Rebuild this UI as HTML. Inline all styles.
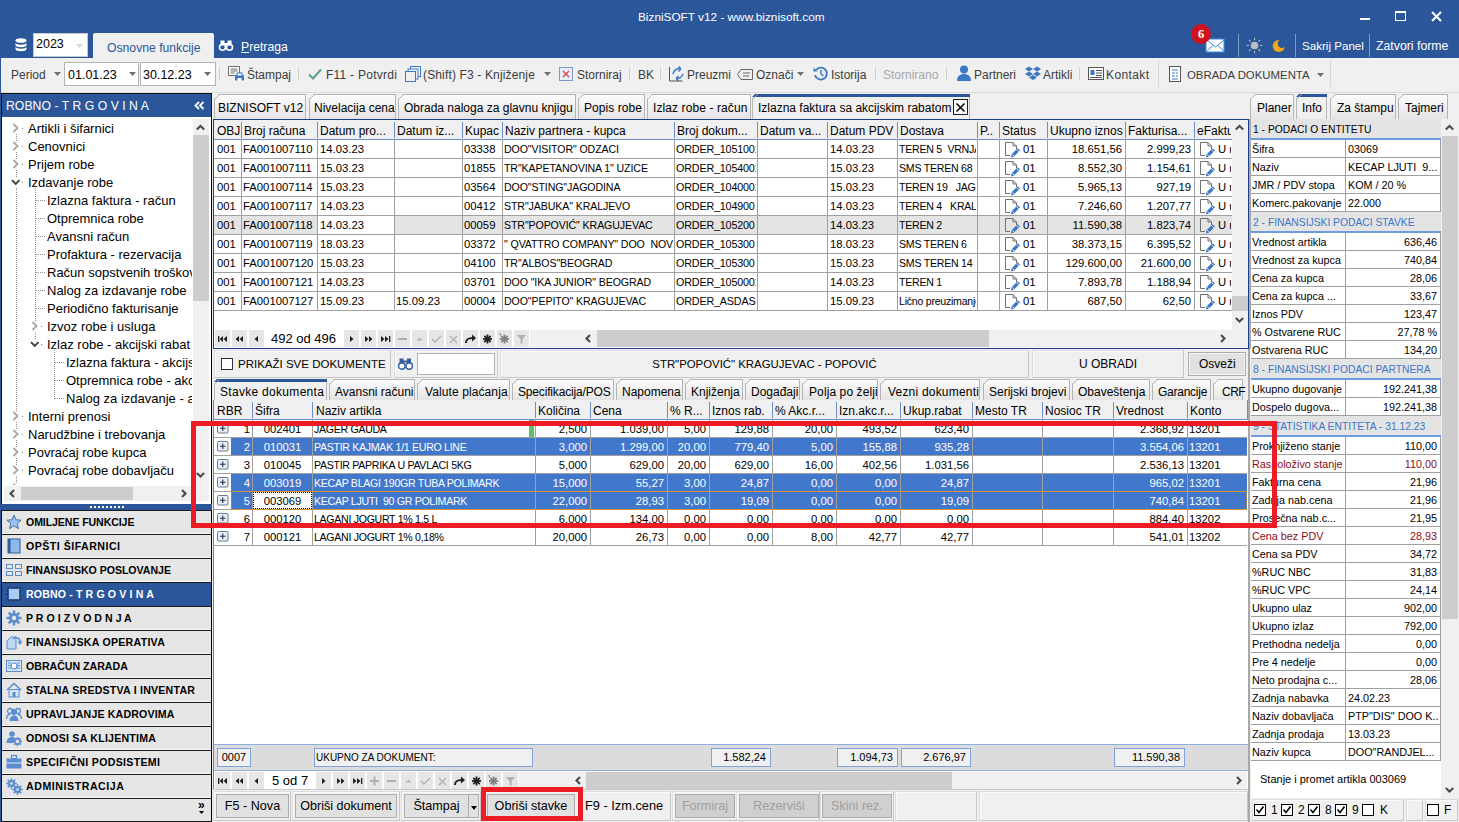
<!DOCTYPE html><html><head><meta charset='utf-8'><style>
*{margin:0;padding:0;box-sizing:border-box}
html,body{width:1459px;height:822px;overflow:hidden;background:#F0F0F0;font-family:"Liberation Sans",sans-serif;font-size:12px;color:#000}
div{position:absolute}
.t{white-space:pre}
svg{position:absolute;overflow:visible}
</style></head><body><div style="left:0px;top:0px;width:1459px;height:58px;background:#2B579A"></div>
<div class="t" style="left:638px;top:9px;height:16px;line-height:16px;color:#fff;font-size:11.8px">BizniSOFT v12 - www.biznisoft.com</div>
<div style="left:1360px;top:18px;width:10px;height:2px;background:#fff"></div>
<div style="left:1395px;top:11px;width:11px;height:10px;border:1.5px solid #fff;border-top-width:2.5px"></div>
<svg style="left:1431px;top:11px" width="11" height="11"><path d="M1 1L10 10M10 1L1 10" stroke="#fff" stroke-width="2"/></svg>
<svg style="left:15px;top:38px" width="12" height="14"><ellipse cx="6" cy="2.5" rx="5.5" ry="2.3" fill="#fff"/><path d="M0.5 4.5v2.5c0 1.3 2.5 2.3 5.5 2.3s5.5-1 5.5-2.3v-2.5c0 1.3-2.5 2.3-5.5 2.3s-5.5-1-5.5-2.3z" fill="#fff"/><path d="M0.5 8.5v2.5c0 1.3 2.5 2.3 5.5 2.3s5.5-1 5.5-2.3v-2.5c0 1.3-2.5 2.3-5.5 2.3s-5.5-1-5.5-2.3z" fill="#fff"/></svg>
<div style="left:33px;top:33px;width:55px;height:24px;background:#fff;border:1px solid #C8C8C8"></div>
<div class="t" style="left:36px;top:36px;height:16px;line-height:16px;font-size:12.5px">2023</div>
<svg style="left:76px;top:44px" width="7" height="4"><path d="M0 0h7L3.5 4z" fill="#D8D8D8"/></svg>
<div style="left:93px;top:33px;width:121px;height:25px;background:#F0F0F0;border-radius:2px 2px 0 0"></div>
<div class="t" style="left:107px;top:40px;height:16px;line-height:16px;color:#2B579A;font-size:12.2px">Osnovne funkcije</div>
<svg style="left:219px;top:40px" width="14" height="11"><circle cx="3.5" cy="7.2" r="3" fill="none" stroke="#fff" stroke-width="1.6"/><circle cx="10.5" cy="7.2" r="3" fill="none" stroke="#fff" stroke-width="1.6"/><rect x="1.5" y="0.5" width="4" height="5" fill="#fff"/><rect x="8.5" y="0.5" width="4" height="5" fill="#fff"/><rect x="5" y="3" width="4" height="2" fill="#fff"/></svg>
<div class="t" style="left:241px;top:39px;height:16px;line-height:16px;color:#fff;font-size:12.2px"><u>P</u>retraga</div>
<svg style="left:1191px;top:24px" width="36" height="30"><rect x="15" y="15" width="18" height="13" fill="#fff" stroke="#3A8DDE" stroke-width="1"/><path d="M15.5 15.5l9 7.5l9-7.5M15.5 27.5l6.5-6M33.5 27.5l-6.5-6" fill="none" stroke="#3A8DDE" stroke-width="1"/><circle cx="10" cy="10" r="9.9" fill="#D0121E"/><text x="10" y="14.2" font-family="Liberation Serif" font-weight="bold" font-size="12.5" fill="#fff" text-anchor="middle">6</text></svg>
<div style="left:1238px;top:34px;width:1px;height:23px;background:#7E9CC8"></div>
<div style="left:1295px;top:34px;width:1px;height:23px;background:#7E9CC8"></div>
<div style="left:1369px;top:34px;width:1px;height:23px;background:#7E9CC8"></div>
<svg style="left:1246px;top:37px" width="17" height="17"><circle cx="8.5" cy="8.5" r="3.8" fill="#BDBDBD"/><line x1="14.10" y1="8.50" x2="16.30" y2="8.50" stroke="#BDBDBD" stroke-width="1.1"/><line x1="12.46" y1="12.46" x2="14.02" y2="14.02" stroke="#BDBDBD" stroke-width="1.1"/><line x1="8.50" y1="14.10" x2="8.50" y2="16.30" stroke="#BDBDBD" stroke-width="1.1"/><line x1="4.54" y1="12.46" x2="2.98" y2="14.02" stroke="#BDBDBD" stroke-width="1.1"/><line x1="2.90" y1="8.50" x2="0.70" y2="8.50" stroke="#BDBDBD" stroke-width="1.1"/><line x1="4.54" y1="4.54" x2="2.98" y2="2.98" stroke="#BDBDBD" stroke-width="1.1"/><line x1="8.50" y1="2.90" x2="8.50" y2="0.70" stroke="#BDBDBD" stroke-width="1.1"/><line x1="12.46" y1="4.54" x2="14.02" y2="2.98" stroke="#BDBDBD" stroke-width="1.1"/></svg>
<svg style="left:1272px;top:39px" width="15" height="14"><defs><mask id="mm"><rect width="15" height="14" fill="#fff"/><circle cx="10" cy="4.6" r="4.3" fill="#000"/></mask></defs><circle cx="6.8" cy="7" r="6.1" fill="#F5A81C" mask="url(#mm)"/></svg>
<div class="t" style="left:1302px;top:38px;height:16px;line-height:16px;color:#fff;font-size:11.6px">Sakrij Panel</div>
<div class="t" style="left:1376px;top:38px;height:16px;line-height:16px;color:#fff;font-size:12.3px">Zatvori forme</div>
<div style="left:0px;top:58px;width:1459px;height:35px;background:#F0F0F0;border-bottom:1px solid #DADADA"></div>
<div class="t" style="left:11px;top:67px;height:16px;line-height:16px;color:#3C3C3C;font-size:12px">Period</div>
<svg style="left:54px;top:72px" width="7" height="4"><path d="M0 0h7L3.5 4z" fill="#707070"/></svg>
<div style="left:64px;top:62px;width:75px;height:24px;background:#fff;border:1px solid #B4B4B4"></div>
<div class="t" style="left:68px;top:67px;height:16px;line-height:16px;font-size:12.5px;color:#000">01.01.23</div>
<svg style="left:129px;top:72px" width="7" height="4"><path d="M0 0h7L3.5 4z" fill="#707070"/></svg>
<div style="left:140px;top:62px;width:76px;height:24px;background:#fff;border:1px solid #B4B4B4"></div>
<div class="t" style="left:143px;top:67px;height:16px;line-height:16px;font-size:12.5px;color:#000">30.12.23</div>
<svg style="left:204px;top:72px" width="7" height="4"><path d="M0 0h7L3.5 4z" fill="#707070"/></svg>
<div style="left:219px;top:67px;width:1px;height:13px;background:#D0D0D0"></div>
<div style="left:298px;top:67px;width:1px;height:13px;background:#D0D0D0"></div>
<div style="left:629px;top:67px;width:1px;height:13px;background:#D0D0D0"></div>
<div style="left:660px;top:67px;width:1px;height:13px;background:#D0D0D0"></div>
<div style="left:875px;top:67px;width:1px;height:13px;background:#D0D0D0"></div>
<div style="left:946px;top:67px;width:1px;height:13px;background:#D0D0D0"></div>
<div style="left:1079px;top:67px;width:1px;height:13px;background:#D0D0D0"></div>
<div style="left:1158px;top:67px;width:1px;height:13px;background:#D0D0D0"></div>
<div style="left:1330px;top:67px;width:1px;height:13px;background:#D0D0D0"></div>
<div style="left:1158px;top:60px;width:1px;height:27px;background:#D8D8D8"></div>
<div style="left:1330px;top:60px;width:1px;height:27px;background:#D8D8D8"></div>
<svg style="left:228px;top:66px" width="17" height="16"><path d="M0.5 0.5h11v9h-11z" fill="#fff" stroke="#6B6B6B"/><path d="M2.5 3h7M2.5 5h7M2.5 7h4" stroke="#6B6B6B"/><rect x="7" y="9" width="9" height="5.5" rx="1" fill="#3C78C8"/><rect x="9" y="7" width="5" height="3" fill="#fff" stroke="#3C78C8"/><rect x="9.5" y="12" width="4" height="3.5" fill="#fff"/></svg>
<div class="t" style="left:247px;top:67px;height:16px;line-height:16px;color:#3C3C3C;font-size:12px">Štampaj</div>
<svg style="left:308px;top:68px" width="14" height="12"><path d="M1 6.5l4 4l8-9" fill="none" stroke="#5AA383" stroke-width="2"/></svg>
<div class="t" style="left:326px;top:67px;height:16px;line-height:16px;color:#3C3C3C;font-size:12px;letter-spacing:0.25px">F11 - Potvrdi</div>
<svg style="left:405px;top:66px" width="16" height="16"><rect x="5.5" y="0.5" width="10" height="10" fill="#F0F0F0" stroke="#3C78C8"/><rect x="3" y="3" width="10" height="10" fill="#F0F0F0" stroke="#3C78C8"/><rect x="0.5" y="5.5" width="10" height="10" fill="#F0F0F0" stroke="#3C78C8"/></svg>
<div class="t" style="left:423px;top:67px;height:16px;line-height:16px;color:#3C3C3C;font-size:12px;letter-spacing:0.15px">(Shift) F3 - Knjiženje</div>
<svg style="left:544px;top:72px" width="7" height="4"><path d="M0 0h7L3.5 4z" fill="#707070"/></svg>
<svg style="left:559px;top:67px" width="14" height="14"><rect x="0.5" y="0.5" width="13" height="13" fill="#E8F0FA" stroke="#7A9CC8"/><path d="M4 4l6 6M10 4l-6 6" stroke="#E04040" stroke-width="1.4"/></svg>
<div class="t" style="left:577px;top:67px;height:16px;line-height:16px;color:#3C3C3C;font-size:12px">Storniraj</div>
<div class="t" style="left:638px;top:67px;height:16px;line-height:16px;color:#3C3C3C;font-size:12px">BK</div>
<svg style="left:669px;top:65px" width="16" height="17"><path d="M0.5 2v14h13" fill="none" stroke="#555" stroke-width="1"/><path d="M4 9c1-4 4-6 8-5M12 4l-2.5-2.5M12 4l-2.5 2.5M14 9c-1 3-4 5-7 4.5M7 13.5l2.5-2.5M7 13.5l2.5 2.5" fill="none" stroke="#3C78C8" stroke-width="1.5"/></svg>
<div class="t" style="left:687px;top:67px;height:16px;line-height:16px;color:#3C3C3C;font-size:12px">Preuzmi</div>
<svg style="left:737px;top:69px" width="16" height="11"><path d="M4 0.5h11.5v10H4L0.5 5.5z" fill="none" stroke="#666"/><path d="M6 4h7M6 7h6" stroke="#666"/></svg>
<div class="t" style="left:756px;top:67px;height:16px;line-height:16px;color:#3C3C3C;font-size:12px">Označi</div>
<svg style="left:797px;top:72px" width="7" height="4"><path d="M0 0h7L3.5 4z" fill="#707070"/></svg>
<svg style="left:813px;top:66px" width="15" height="15"><path d="M3 4A6 6 0 1 1 2 9" fill="none" stroke="#3C78C8" stroke-width="1.8"/><path d="M0.5 1.5v4h4z" fill="#3C78C8"/><path d="M8 4v4l2.5 2" fill="none" stroke="#3C78C8" stroke-width="1.5"/></svg>
<div class="t" style="left:831px;top:67px;height:16px;line-height:16px;color:#3C3C3C;font-size:12px">Istorija</div>
<div class="t" style="left:883px;top:67px;height:16px;line-height:16px;color:#A8A8A8;font-size:12px">Stornirano</div>
<svg style="left:957px;top:65px" width="14" height="16"><circle cx="7" cy="4.5" r="4" fill="#3C78C8"/><path d="M0 16c0-5 3-7 7-7s7 2 7 7z" fill="#3C78C8"/></svg>
<div class="t" style="left:974px;top:67px;height:16px;line-height:16px;color:#3C3C3C;font-size:12px">Partneri</div>
<svg style="left:1025px;top:66px" width="16" height="15"><path d="M4 0.5L0 3l4 2.5L8 3zM12 0.5L8 3l4 2.5L16 3zM4 5.5L0 8l4 2.5L8 8zM12 5.5L8 8l4 2.5L16 8zM4 11.5L8 14l4-2.5L8 9z" fill="#3C78C8"/></svg>
<div class="t" style="left:1043px;top:67px;height:16px;line-height:16px;color:#3C3C3C;font-size:12px">Artikli</div>
<svg style="left:1088px;top:67px" width="16" height="13"><rect x="0.5" y="0.5" width="15" height="12" fill="#fff" stroke="#555"/><rect x="2.5" y="3" width="4" height="5" fill="#3C78C8"/><path d="M8 3.5h6M8 6h6M8 8.5h6M2 10.5h12" stroke="#555"/></svg>
<div class="t" style="left:1106px;top:67px;height:16px;line-height:16px;color:#3C3C3C;font-size:12px;letter-spacing:0.4px">Kontakt</div>
<svg style="left:1169px;top:66px" width="12" height="16"><rect x="0.5" y="0.5" width="11" height="15" fill="#fff" stroke="#555"/><path d="M3 4h6M3 7h3M7 7h2M3 10h3M7 10h2M3 13h6" stroke="#3C78C8"/></svg>
<div class="t" style="left:1187px;top:67px;height:16px;line-height:16px;color:#3C3C3C;font-size:11.4px">OBRADA DOKUMENTA</div>
<svg style="left:1317px;top:73px" width="7" height="4"><path d="M0 0h7L3.5 4z" fill="#707070"/></svg>
<div style="left:0px;top:93px;width:212px;height:729px;background:#fff;border-left:2px solid #101010;border-right:1px solid #000"></div>
<div style="left:0px;top:93px;width:212px;height:24px;background:#2B579A;border:1px solid #101010;border-bottom:none;border-left-width:2px"></div>
<div class="t" style="left:6px;top:98px;height:16px;line-height:16px;color:#fff;font-size:12.2px;letter-spacing:0.05px">ROBNO - T R G O V I N A</div>
<svg style="left:194px;top:101px" width="11" height="9"><path d="M5 1L1.5 4.5L5 8M9.5 1L6 4.5L9.5 8" fill="none" stroke="#fff" stroke-width="1.8"/></svg>
<div style="left:2px;top:119px;width:190px;height:366px;overflow:hidden">
<div style="left:14px;top:15px;width:1px;height:7px;background-image:linear-gradient(#909090 50%,transparent 50%);background-size:1px 2px"></div>
<div style="left:14px;top:33px;width:1px;height:7px;background-image:linear-gradient(#909090 50%,transparent 50%);background-size:1px 2px"></div>
<div style="left:14px;top:51px;width:1px;height:7px;background-image:linear-gradient(#909090 50%,transparent 50%);background-size:1px 2px"></div>
<div style="left:14px;top:69px;width:1px;height:223px;background-image:linear-gradient(#909090 50%,transparent 50%);background-size:1px 2px"></div>
<div style="left:14px;top:303px;width:1px;height:7px;background-image:linear-gradient(#909090 50%,transparent 50%);background-size:1px 2px"></div>
<div style="left:14px;top:321px;width:1px;height:7px;background-image:linear-gradient(#909090 50%,transparent 50%);background-size:1px 2px"></div>
<div style="left:14px;top:339px;width:1px;height:7px;background-image:linear-gradient(#909090 50%,transparent 50%);background-size:1px 2px"></div>
<div style="left:14px;top:357px;width:1px;height:7px;background-image:linear-gradient(#909090 50%,transparent 50%);background-size:1px 2px"></div>
<div style="left:14px;top:375px;width:1px;height:-8px;background-image:linear-gradient(#909090 50%,transparent 50%);background-size:1px 2px"></div>
<div style="left:33px;top:69px;width:1px;height:120px;background-image:linear-gradient(#909090 50%,transparent 50%);background-size:1px 2px"></div>
<div style="left:33px;top:189px;width:1px;height:13px;background-image:linear-gradient(#909090 50%,transparent 50%);background-size:1px 2px"></div>
<div style="left:33px;top:213px;width:1px;height:7px;background-image:linear-gradient(#909090 50%,transparent 50%);background-size:1px 2px"></div>
<div style="left:52px;top:231px;width:1px;height:49px;background-image:linear-gradient(#909090 50%,transparent 50%);background-size:1px 2px"></div>
<div style="left:20px;top:9px;width:1px;height:1px;background:#808080"></div>
<svg style="left:10px;top:4px" width="8" height="11"><path d="M1.5 1L5.5 5L1.5 9" fill="none" stroke="#A8A8A8" stroke-width="1.9"/></svg>
<div class="t" style="left:26px;top:1px;height:18px;line-height:18px;font-size:13px;color:#000">Artikli i šifarnici</div>
<div style="left:20px;top:27px;width:1px;height:1px;background:#808080"></div>
<svg style="left:10px;top:22px" width="8" height="11"><path d="M1.5 1L5.5 5L1.5 9" fill="none" stroke="#A8A8A8" stroke-width="1.9"/></svg>
<div class="t" style="left:26px;top:19px;height:18px;line-height:18px;font-size:13px;color:#000">Cenovnici</div>
<div style="left:20px;top:45px;width:1px;height:1px;background:#808080"></div>
<svg style="left:10px;top:40px" width="8" height="11"><path d="M1.5 1L5.5 5L1.5 9" fill="none" stroke="#A8A8A8" stroke-width="1.9"/></svg>
<div class="t" style="left:26px;top:37px;height:18px;line-height:18px;font-size:13px;color:#000">Prijem robe</div>
<div style="left:20px;top:63px;width:1px;height:1px;background:#808080"></div>
<svg style="left:9px;top:60px" width="10" height="8"><path d="M1 1.2L4.75 5L8.5 1.2" fill="none" stroke="#404040" stroke-width="1.9"/></svg>
<div class="t" style="left:26px;top:55px;height:18px;line-height:18px;font-size:13px;color:#000">Izdavanje robe</div>
<div style="left:34px;top:81px;width:9px;height:1px;background-image:linear-gradient(90deg,#909090 50%,transparent 50%);background-size:2px 1px"></div>
<div class="t" style="left:45px;top:73px;height:18px;line-height:18px;font-size:13px;color:#000">Izlazna faktura - račun</div>
<div style="left:34px;top:99px;width:9px;height:1px;background-image:linear-gradient(90deg,#909090 50%,transparent 50%);background-size:2px 1px"></div>
<div class="t" style="left:45px;top:91px;height:18px;line-height:18px;font-size:13px;color:#000">Otpremnica robe</div>
<div style="left:34px;top:117px;width:9px;height:1px;background-image:linear-gradient(90deg,#909090 50%,transparent 50%);background-size:2px 1px"></div>
<div class="t" style="left:45px;top:109px;height:18px;line-height:18px;font-size:13px;color:#000">Avansni račun</div>
<div style="left:34px;top:135px;width:9px;height:1px;background-image:linear-gradient(90deg,#909090 50%,transparent 50%);background-size:2px 1px"></div>
<div class="t" style="left:45px;top:127px;height:18px;line-height:18px;font-size:13px;color:#000">Profaktura - rezervacija</div>
<div style="left:34px;top:153px;width:9px;height:1px;background-image:linear-gradient(90deg,#909090 50%,transparent 50%);background-size:2px 1px"></div>
<div class="t" style="left:45px;top:145px;height:18px;line-height:18px;font-size:13px;color:#000">Račun sopstvenih troškova</div>
<div style="left:34px;top:171px;width:9px;height:1px;background-image:linear-gradient(90deg,#909090 50%,transparent 50%);background-size:2px 1px"></div>
<div class="t" style="left:45px;top:163px;height:18px;line-height:18px;font-size:13px;color:#000">Nalog za izdavanje robe</div>
<div style="left:34px;top:189px;width:9px;height:1px;background-image:linear-gradient(90deg,#909090 50%,transparent 50%);background-size:2px 1px"></div>
<div class="t" style="left:45px;top:181px;height:18px;line-height:18px;font-size:13px;color:#000">Periodično fakturisanje</div>
<div style="left:39px;top:207px;width:1px;height:1px;background:#808080"></div>
<svg style="left:29px;top:202px" width="8" height="11"><path d="M1.5 1L5.5 5L1.5 9" fill="none" stroke="#A8A8A8" stroke-width="1.9"/></svg>
<div class="t" style="left:45px;top:199px;height:18px;line-height:18px;font-size:13px;color:#000">Izvoz robe i usluga</div>
<div style="left:39px;top:225px;width:1px;height:1px;background:#808080"></div>
<svg style="left:28px;top:222px" width="10" height="8"><path d="M1 1.2L4.75 5L8.5 1.2" fill="none" stroke="#404040" stroke-width="1.9"/></svg>
<div class="t" style="left:45px;top:217px;height:18px;line-height:18px;font-size:13px;color:#000">Izlaz robe - akcijski rabat</div>
<div style="left:53px;top:243px;width:9px;height:1px;background-image:linear-gradient(90deg,#909090 50%,transparent 50%);background-size:2px 1px"></div>
<div class="t" style="left:64px;top:235px;height:18px;line-height:18px;font-size:13px;color:#000">Izlazna faktura - akcijski rabat</div>
<div style="left:53px;top:261px;width:9px;height:1px;background-image:linear-gradient(90deg,#909090 50%,transparent 50%);background-size:2px 1px"></div>
<div class="t" style="left:64px;top:253px;height:18px;line-height:18px;font-size:13px;color:#000">Otpremnica robe - akcijski</div>
<div style="left:53px;top:279px;width:9px;height:1px;background-image:linear-gradient(90deg,#909090 50%,transparent 50%);background-size:2px 1px"></div>
<div class="t" style="left:64px;top:271px;height:18px;line-height:18px;font-size:13px;color:#000">Nalog za izdavanje - akcijski</div>
<div style="left:20px;top:297px;width:1px;height:1px;background:#808080"></div>
<svg style="left:10px;top:292px" width="8" height="11"><path d="M1.5 1L5.5 5L1.5 9" fill="none" stroke="#A8A8A8" stroke-width="1.9"/></svg>
<div class="t" style="left:26px;top:289px;height:18px;line-height:18px;font-size:13px;color:#000">Interni prenosi</div>
<div style="left:20px;top:315px;width:1px;height:1px;background:#808080"></div>
<svg style="left:10px;top:310px" width="8" height="11"><path d="M1.5 1L5.5 5L1.5 9" fill="none" stroke="#A8A8A8" stroke-width="1.9"/></svg>
<div class="t" style="left:26px;top:307px;height:18px;line-height:18px;font-size:13px;color:#000">Narudžbine i trebovanja</div>
<div style="left:20px;top:333px;width:1px;height:1px;background:#808080"></div>
<svg style="left:10px;top:328px" width="8" height="11"><path d="M1.5 1L5.5 5L1.5 9" fill="none" stroke="#A8A8A8" stroke-width="1.9"/></svg>
<div class="t" style="left:26px;top:325px;height:18px;line-height:18px;font-size:13px;color:#000">Povraćaj robe kupca</div>
<div style="left:20px;top:351px;width:1px;height:1px;background:#808080"></div>
<svg style="left:10px;top:346px" width="8" height="11"><path d="M1.5 1L5.5 5L1.5 9" fill="none" stroke="#A8A8A8" stroke-width="1.9"/></svg>
<div class="t" style="left:26px;top:343px;height:18px;line-height:18px;font-size:13px;color:#000">Povraćaj robe dobavljaču</div>
<div style="left:20px;top:369px;width:1px;height:1px;background:#808080"></div>
<svg style="left:10px;top:364px" width="8" height="11"><path d="M1.5 1L5.5 5L1.5 9" fill="none" stroke="#A8A8A8" stroke-width="1.9"/></svg>
</div>
<div style="left:193px;top:119px;width:16px;height:367px;background:#F0F0F0"></div>
<div style="left:193px;top:135px;width:16px;height:166px;background:#CDCDCD"></div>
<svg style="left:196px;top:124px" width="9" height="9"><path d="M0.8 5.5L4.5 2L8.2 5.5" fill="none" stroke="#4A4A4A" stroke-width="2.1"/></svg>
<svg style="left:196px;top:471px" width="9" height="9"><path d="M0.8 2L4.5 5.5L8.2 2" fill="none" stroke="#4A4A4A" stroke-width="2.1"/></svg>
<div style="left:4px;top:486px;width:189px;height:15px;background:#F0F0F0"></div>
<div style="left:21px;top:487px;width:112px;height:13px;background:#CDCDCD"></div>
<svg style="left:8px;top:489px" width="9" height="9"><path d="M6 1L2.5 4.5L6 8" fill="none" stroke="#4A4A4A" stroke-width="2.1"/></svg>
<svg style="left:180px;top:489px" width="9" height="9"><path d="M2 1L5.5 4.5L2 8" fill="none" stroke="#4A4A4A" stroke-width="2.1"/></svg>
<div style="left:193px;top:486px;width:16px;height:15px;background:#F0F0F0"></div>
<div style="left:0px;top:504px;width:212px;height:6px;background:#2B579A"></div>
<div style="left:90px;top:506px;width:34px;height:2px;background-image:linear-gradient(90deg,#fff 60%,transparent 60%);background-size:4px 2px"></div>
<div style="left:2px;top:510px;width:209px;height:24px;background:#E6E6E6;border-top:1px solid #1A1A1A;border-bottom:1px solid #F8F8F8"></div>
<div class="t" style="left:26px;top:514px;height:16px;line-height:16px;color:#000;font-weight:bold;font-size:10.6px;letter-spacing:-0.1px">OMILJENE FUNKCIJE</div>
<svg style="left:6px;top:514px" width="16" height="16"><polygon points="8.00,1.00 10.00,5.75 15.13,6.18 11.23,9.55 12.41,14.57 8.00,11.90 3.59,14.57 4.77,9.55 0.87,6.18 6.00,5.75" fill="#9CC3EE" stroke="#2F5D9A" stroke-width="0.8"/></svg>
<div style="left:2px;top:534px;width:209px;height:24px;background:#E6E6E6;border-top:1px solid #1A1A1A;border-bottom:1px solid #F8F8F8"></div>
<div class="t" style="left:26px;top:538px;height:16px;line-height:16px;color:#000;font-weight:bold;font-size:10.6px;letter-spacing:0.49px">OPŠTI ŠIFARNICI</div>
<svg style="left:6px;top:538px" width="16" height="16"><rect x="2" y="1" width="12" height="14" fill="#8DB8EA" stroke="#2F5D9A"/><rect x="2" y="1" width="2.5" height="14" fill="#2F5D9A"/></svg>
<div style="left:2px;top:558px;width:209px;height:24px;background:#E6E6E6;border-top:1px solid #1A1A1A;border-bottom:1px solid #F8F8F8"></div>
<div class="t" style="left:26px;top:562px;height:16px;line-height:16px;color:#000;font-weight:bold;font-size:10.6px;letter-spacing:-0.04px">FINANSIJSKO POSLOVANJE</div>
<svg style="left:6px;top:562px" width="16" height="16"><rect x="0.5" y="2.5" width="6" height="4" fill="none" stroke="#5B8DD0"/><rect x="9.5" y="2.5" width="6" height="4" fill="none" stroke="#5B8DD0"/><rect x="0.5" y="9.5" width="6" height="4" fill="none" stroke="#5B8DD0"/><rect x="9.5" y="9.5" width="6" height="4" fill="none" stroke="#5B8DD0"/></svg>
<div style="left:2px;top:582px;width:209px;height:24px;background:#2B579A;border-top:1px solid #1A1A1A;border-bottom:1px solid #2B579A"></div>
<div class="t" style="left:26px;top:586px;height:16px;line-height:16px;color:#fff;font-weight:bold;font-size:10.6px;letter-spacing:0.13px">ROBNO - T R G O V I N A</div>
<svg style="left:6px;top:586px" width="16" height="16"><rect x="1.5" y="1.5" width="13" height="13" fill="none" stroke="#202A40" stroke-dasharray="2 2"/><rect x="3" y="3" width="10" height="10" fill="#A8CBF2"/></svg>
<div style="left:2px;top:606px;width:209px;height:24px;background:#E6E6E6;border-top:1px solid #1A1A1A;border-bottom:1px solid #F8F8F8"></div>
<div class="t" style="left:26px;top:610px;height:16px;line-height:16px;color:#000;font-weight:bold;font-size:10.6px;letter-spacing:0.02px">P R O I Z V O D N J A</div>
<svg style="left:6px;top:610px" width="16" height="16"><circle cx="8" cy="8" r="5" fill="#5B8DD0"/><circle cx="8" cy="8" r="2.2" fill="#E6E6E6"/><line x1="12.00" y1="8.00" x2="15.50" y2="8.00" stroke="#5B8DD0" stroke-width="2.4"/><line x1="10.83" y1="10.83" x2="13.30" y2="13.30" stroke="#5B8DD0" stroke-width="2.4"/><line x1="8.00" y1="12.00" x2="8.00" y2="15.50" stroke="#5B8DD0" stroke-width="2.4"/><line x1="5.17" y1="10.83" x2="2.70" y2="13.30" stroke="#5B8DD0" stroke-width="2.4"/><line x1="4.00" y1="8.00" x2="0.50" y2="8.00" stroke="#5B8DD0" stroke-width="2.4"/><line x1="5.17" y1="5.17" x2="2.70" y2="2.70" stroke="#5B8DD0" stroke-width="2.4"/><line x1="8.00" y1="4.00" x2="8.00" y2="0.50" stroke="#5B8DD0" stroke-width="2.4"/><line x1="10.83" y1="5.17" x2="13.30" y2="2.70" stroke="#5B8DD0" stroke-width="2.4"/></svg>
<div style="left:2px;top:630px;width:209px;height:24px;background:#E6E6E6;border-top:1px solid #1A1A1A;border-bottom:1px solid #F8F8F8"></div>
<div class="t" style="left:26px;top:634px;height:16px;line-height:16px;color:#000;font-weight:bold;font-size:10.6px;letter-spacing:0.27px">FINANSIJSKA OPERATIVA</div>
<svg style="left:6px;top:634px" width="16" height="16"><path d="M1 15V7l4-4h5v12z" fill="#BFD8F5" stroke="#5B8DD0"/><path d="M7 5c3-3 7-1 7 3" fill="none" stroke="#5B8DD0" stroke-width="1.6"/><path d="M11.5 7.5h5l-2.5 3.5z" fill="#5B8DD0"/></svg>
<div style="left:2px;top:654px;width:209px;height:24px;background:#E6E6E6;border-top:1px solid #1A1A1A;border-bottom:1px solid #F8F8F8"></div>
<div class="t" style="left:26px;top:658px;height:16px;line-height:16px;color:#000;font-weight:bold;font-size:10.6px;letter-spacing:0px">OBRAČUN ZARADA</div>
<svg style="left:6px;top:658px" width="16" height="16"><rect x="0.5" y="2.5" width="15" height="11" fill="#D6E6F8" stroke="#5B8DD0"/><path d="M2 5h3M2 7.5h3M2 10h3M11 5h3M11 7.5h3M11 10h3" stroke="#5B8DD0"/><circle cx="8" cy="8" r="3" fill="#fff" stroke="#5B8DD0" stroke-width="1.2"/></svg>
<div style="left:2px;top:678px;width:209px;height:24px;background:#E6E6E6;border-top:1px solid #1A1A1A;border-bottom:1px solid #F8F8F8"></div>
<div class="t" style="left:26px;top:682px;height:16px;line-height:16px;color:#000;font-weight:bold;font-size:10.6px;letter-spacing:0.22px">STALNA SREDSTVA I INVENTAR</div>
<svg style="left:6px;top:682px" width="16" height="16"><path d="M1 8L8 1.5L15 8" fill="none" stroke="#5B8DD0" stroke-width="1.5"/><rect x="3" y="7.5" width="10" height="7.5" fill="#D6E6F8" stroke="#5B8DD0"/><rect x="6.5" y="10" width="3" height="5" fill="#5B8DD0"/></svg>
<div style="left:2px;top:702px;width:209px;height:24px;background:#E6E6E6;border-top:1px solid #1A1A1A;border-bottom:1px solid #F8F8F8"></div>
<div class="t" style="left:26px;top:706px;height:16px;line-height:16px;color:#000;font-weight:bold;font-size:10.6px;letter-spacing:0.16px">UPRAVLJANJE KADROVIMA</div>
<svg style="left:6px;top:706px" width="16" height="16"><circle cx="4" cy="5" r="2.5" fill="none" stroke="#5B8DD0" stroke-width="1.3"/><circle cx="12" cy="5" r="2.5" fill="none" stroke="#5B8DD0" stroke-width="1.3"/><path d="M0.5 13c0-3 1.5-4.5 3.5-4.5M15.5 13c0-3-1.5-4.5-3.5-4.5" fill="none" stroke="#5B8DD0" stroke-width="1.3"/><circle cx="8" cy="6" r="3" fill="#5B8DD0"/><path d="M3.5 15c0-3.5 2-5.5 4.5-5.5s4.5 2 4.5 5.5z" fill="#5B8DD0"/></svg>
<div style="left:2px;top:726px;width:209px;height:24px;background:#E6E6E6;border-top:1px solid #1A1A1A;border-bottom:1px solid #F8F8F8"></div>
<div class="t" style="left:26px;top:730px;height:16px;line-height:16px;color:#000;font-weight:bold;font-size:10.6px;letter-spacing:0.23px">ODNOSI SA KLIJENTIMA</div>
<svg style="left:6px;top:730px" width="16" height="16"><circle cx="6" cy="4" r="2.8" fill="#5B8DD0"/><path d="M0.5 13c0-4 2.5-6 5.5-6c1.5 0 2.5 0.5 3.5 1.5L7.5 13z" fill="#5B8DD0"/><circle cx="11.5" cy="11.5" r="2.6" fill="none" stroke="#5B8DD0" stroke-width="1.6"/><line x1="14.00" y1="11.50" x2="16.00" y2="11.50" stroke="#5B8DD0" stroke-width="1.4"/><line x1="13.27" y1="13.27" x2="14.68" y2="14.68" stroke="#5B8DD0" stroke-width="1.4"/><line x1="11.50" y1="14.00" x2="11.50" y2="16.00" stroke="#5B8DD0" stroke-width="1.4"/><line x1="9.73" y1="13.27" x2="8.32" y2="14.68" stroke="#5B8DD0" stroke-width="1.4"/><line x1="9.00" y1="11.50" x2="7.00" y2="11.50" stroke="#5B8DD0" stroke-width="1.4"/><line x1="9.73" y1="9.73" x2="8.32" y2="8.32" stroke="#5B8DD0" stroke-width="1.4"/><line x1="11.50" y1="9.00" x2="11.50" y2="7.00" stroke="#5B8DD0" stroke-width="1.4"/><line x1="13.27" y1="9.73" x2="14.68" y2="8.32" stroke="#5B8DD0" stroke-width="1.4"/></svg>
<div style="left:2px;top:750px;width:209px;height:24px;background:#E6E6E6;border-top:1px solid #1A1A1A;border-bottom:1px solid #F8F8F8"></div>
<div class="t" style="left:26px;top:754px;height:16px;line-height:16px;color:#000;font-weight:bold;font-size:10.6px;letter-spacing:0.31px">SPECIFIČNI PODSISTEMI</div>
<svg style="left:6px;top:754px" width="16" height="16"><rect x="0.5" y="4.5" width="15" height="10" fill="#5B8DD0"/><rect x="5.5" y="1.5" width="5" height="3" fill="none" stroke="#5B8DD0" stroke-width="1.2"/><line x1="0.5" y1="9" x2="15.5" y2="9" stroke="#E6E6E6"/></svg>
<div style="left:2px;top:774px;width:209px;height:24px;background:#E6E6E6;border-top:1px solid #1A1A1A;border-bottom:1px solid #F8F8F8"></div>
<div class="t" style="left:26px;top:778px;height:16px;line-height:16px;color:#000;font-weight:bold;font-size:10.6px;letter-spacing:0.56px">ADMINISTRACIJA</div>
<svg style="left:6px;top:778px" width="16" height="16"><circle cx="5.5" cy="5.5" r="3.5" fill="#5B8DD0"/><circle cx="5.5" cy="5.5" r="1.3" fill="#E6E6E6"/><circle cx="11.5" cy="11.5" r="3.5" fill="#5B8DD0"/><circle cx="11.5" cy="11.5" r="1.3" fill="#E6E6E6"/><line x1="8.50" y1="5.50" x2="10.80" y2="5.50" stroke="#5B8DD0" stroke-width="1.6"/><line x1="14.50" y1="11.50" x2="16.80" y2="11.50" stroke="#5B8DD0" stroke-width="1.6"/><line x1="7.62" y1="7.62" x2="9.25" y2="9.25" stroke="#5B8DD0" stroke-width="1.6"/><line x1="13.62" y1="13.62" x2="15.25" y2="15.25" stroke="#5B8DD0" stroke-width="1.6"/><line x1="5.50" y1="8.50" x2="5.50" y2="10.80" stroke="#5B8DD0" stroke-width="1.6"/><line x1="11.50" y1="14.50" x2="11.50" y2="16.80" stroke="#5B8DD0" stroke-width="1.6"/><line x1="3.38" y1="7.62" x2="1.75" y2="9.25" stroke="#5B8DD0" stroke-width="1.6"/><line x1="9.38" y1="13.62" x2="7.75" y2="15.25" stroke="#5B8DD0" stroke-width="1.6"/><line x1="2.50" y1="5.50" x2="0.20" y2="5.50" stroke="#5B8DD0" stroke-width="1.6"/><line x1="8.50" y1="11.50" x2="6.20" y2="11.50" stroke="#5B8DD0" stroke-width="1.6"/><line x1="3.38" y1="3.38" x2="1.75" y2="1.75" stroke="#5B8DD0" stroke-width="1.6"/><line x1="9.38" y1="9.38" x2="7.75" y2="7.75" stroke="#5B8DD0" stroke-width="1.6"/><line x1="5.50" y1="2.50" x2="5.50" y2="0.20" stroke="#5B8DD0" stroke-width="1.6"/><line x1="11.50" y1="8.50" x2="11.50" y2="6.20" stroke="#5B8DD0" stroke-width="1.6"/><line x1="7.62" y1="3.38" x2="9.25" y2="1.75" stroke="#5B8DD0" stroke-width="1.6"/><line x1="13.62" y1="9.38" x2="15.25" y2="7.75" stroke="#5B8DD0" stroke-width="1.6"/></svg>
<div style="left:2px;top:798px;width:209px;height:24px;background:#E6E6E6;border-top:1px solid #1A1A1A;border-bottom:1px solid #1A1A1A"></div>
<div class="t" style="left:198px;top:799px;height:12px;line-height:12px;font-size:12px;font-weight:bold">&raquo;</div>
<svg style="left:199px;top:811px" width="5" height="3"><path d="M0 0h5L2.5 3z" fill="#000"/></svg>
<div style="left:213px;top:93px;width:1036px;height:26px;background:#F0F0F0"></div>
<div style="left:214px;top:94px;width:92px;height:25px;background:linear-gradient(#FCFCFC,#E4E4E4);border:1px solid #B4B4B4;border-bottom:none;clip-path:polygon(5px 0,100% 0,100% 100%,0 100%,0 5px)"></div>
<svg style="left:214px;top:94px" width="6" height="6"><line x1="0.5" y1="5.5" x2="5.5" y2="0.5" stroke="#B4B4B4"/></svg>
<div class="t" style="left:218px;top:100px;height:16px;line-height:16px;font-size:12px;letter-spacing:0px">BIZNISOFT v12</div>
<div style="left:309px;top:94px;width:87px;height:25px;background:linear-gradient(#FCFCFC,#E4E4E4);border:1px solid #B4B4B4;border-bottom:none;clip-path:polygon(5px 0,100% 0,100% 100%,0 100%,0 5px)"></div>
<svg style="left:309px;top:94px" width="6" height="6"><line x1="0.5" y1="5.5" x2="5.5" y2="0.5" stroke="#B4B4B4"/></svg>
<div class="t" style="left:314px;top:100px;height:16px;line-height:16px;font-size:12px;letter-spacing:0px">Nivelacija cena</div>
<div style="left:398px;top:94px;width:178px;height:25px;background:linear-gradient(#FCFCFC,#E4E4E4);border:1px solid #B4B4B4;border-bottom:none;clip-path:polygon(5px 0,100% 0,100% 100%,0 100%,0 5px)"></div>
<svg style="left:398px;top:94px" width="6" height="6"><line x1="0.5" y1="5.5" x2="5.5" y2="0.5" stroke="#B4B4B4"/></svg>
<div class="t" style="left:404px;top:100px;height:16px;line-height:16px;font-size:12px;letter-spacing:0px">Obrada naloga za glavnu knjigu</div>
<div style="left:578px;top:94px;width:67px;height:25px;background:linear-gradient(#FCFCFC,#E4E4E4);border:1px solid #B4B4B4;border-bottom:none;clip-path:polygon(5px 0,100% 0,100% 100%,0 100%,0 5px)"></div>
<svg style="left:578px;top:94px" width="6" height="6"><line x1="0.5" y1="5.5" x2="5.5" y2="0.5" stroke="#B4B4B4"/></svg>
<div class="t" style="left:584px;top:100px;height:16px;line-height:16px;font-size:12px;letter-spacing:0.05px">Popis robe</div>
<div style="left:647px;top:94px;width:104px;height:25px;background:linear-gradient(#FCFCFC,#E4E4E4);border:1px solid #B4B4B4;border-bottom:none;clip-path:polygon(5px 0,100% 0,100% 100%,0 100%,0 5px)"></div>
<svg style="left:647px;top:94px" width="6" height="6"><line x1="0.5" y1="5.5" x2="5.5" y2="0.5" stroke="#B4B4B4"/></svg>
<div class="t" style="left:653px;top:100px;height:16px;line-height:16px;font-size:12px;letter-spacing:0.1px">Izlaz robe - račun</div>
<div style="left:752px;top:94px;width:218px;height:26px;background:#F0F0F0;border-left:1px solid #B8B8B8;border-right:1px solid #B8B8B8;clip-path:polygon(5px 0,100% 0,100% 100%,0 100%,0 5px)"></div>
<div style="left:752px;top:94px;width:218px;height:3px;background:#2B579A;clip-path:polygon(3px 0,100% 0,100% 100%,0 100%)"></div>
<svg style="left:752px;top:94px" width="6" height="6"><line x1="0.5" y1="5.5" x2="5.5" y2="0.5" stroke="#B4B4B4"/></svg>
<div class="t" style="left:758px;top:100px;height:16px;line-height:16px;font-size:12px;letter-spacing:0px">Izlazna faktura sa akcijskim rabatom</div>
<div style="left:953px;top:99px;width:15px;height:16px;border:1px solid #202020;background:#F8F8F8"></div>
<svg style="left:956px;top:103px" width="9" height="9"><path d="M0.5 0.5L8.5 8.5M8.5 0.5L0.5 8.5" stroke="#000" stroke-width="1.5"/></svg>
<div style="left:213px;top:119px;width:1036px;height:230px;background:#fff;border:1px solid #1C3C8C"></div>
<div style="left:214px;top:120px;width:1018px;height:19px;background:#F0F0F0"></div>
<div style="left:214px;top:139px;width:1018px;height:1px;background:#6C8ECB"></div>
<div style="left:214px;top:120px;width:1018px;height:191px;overflow:hidden">
<div class="t" style="left:3px;top:2px;width:23px;height:18px;line-height:18px;font-size:12px;overflow:hidden">OBJ</div>
<div class="t" style="left:30px;top:2px;width:72px;height:18px;line-height:18px;font-size:12px;overflow:hidden">Broj računa</div>
<div style="left:27px;top:2px;width:1px;height:16px;background:#6C8ECB"></div>
<div class="t" style="left:106px;top:2px;width:73px;height:18px;line-height:18px;font-size:12px;overflow:hidden">Datum pro...</div>
<div style="left:103px;top:2px;width:1px;height:16px;background:#6C8ECB"></div>
<div class="t" style="left:183px;top:2px;width:64px;height:18px;line-height:18px;font-size:12px;overflow:hidden">Datum iz...</div>
<div style="left:180px;top:2px;width:1px;height:16px;background:#6C8ECB"></div>
<div class="t" style="left:251px;top:2px;width:36px;height:18px;line-height:18px;font-size:12px;overflow:hidden">Kupac</div>
<div style="left:248px;top:2px;width:1px;height:16px;background:#6C8ECB"></div>
<div class="t" style="left:291px;top:2px;width:168px;height:18px;line-height:18px;font-size:12px;overflow:hidden">Naziv partnera - kupca</div>
<div style="left:288px;top:2px;width:1px;height:16px;background:#6C8ECB"></div>
<div class="t" style="left:463px;top:2px;width:79px;height:18px;line-height:18px;font-size:12px;overflow:hidden">Broj dokum...</div>
<div style="left:460px;top:2px;width:1px;height:16px;background:#6C8ECB"></div>
<div class="t" style="left:546px;top:2px;width:66px;height:18px;line-height:18px;font-size:12px;overflow:hidden">Datum va...</div>
<div style="left:543px;top:2px;width:1px;height:16px;background:#6C8ECB"></div>
<div class="t" style="left:616px;top:2px;width:66px;height:18px;line-height:18px;font-size:12px;overflow:hidden">Datum PDV</div>
<div style="left:613px;top:2px;width:1px;height:16px;background:#6C8ECB"></div>
<div class="t" style="left:686px;top:2px;width:76px;height:18px;line-height:18px;font-size:12px;overflow:hidden">Dostava</div>
<div style="left:683px;top:2px;width:1px;height:16px;background:#6C8ECB"></div>
<div class="t" style="left:766px;top:2px;width:18px;height:18px;line-height:18px;font-size:12px;overflow:hidden">P..</div>
<div style="left:763px;top:2px;width:1px;height:16px;background:#6C8ECB"></div>
<div class="t" style="left:788px;top:2px;width:44px;height:18px;line-height:18px;font-size:12px;overflow:hidden">Status</div>
<div style="left:785px;top:2px;width:1px;height:16px;background:#6C8ECB"></div>
<div class="t" style="left:836px;top:2px;width:74px;height:18px;line-height:18px;font-size:12px;overflow:hidden">Ukupno iznos</div>
<div style="left:833px;top:2px;width:1px;height:16px;background:#6C8ECB"></div>
<div class="t" style="left:914px;top:2px;width:65px;height:18px;line-height:18px;font-size:12px;overflow:hidden">Fakturisa...</div>
<div style="left:911px;top:2px;width:1px;height:16px;background:#6C8ECB"></div>
<div class="t" style="left:983px;top:2px;width:34px;height:18px;line-height:18px;font-size:12px;overflow:hidden">eFaktura</div>
<div style="left:980px;top:2px;width:1px;height:16px;background:#6C8ECB"></div>
<div style="left:0px;top:38px;width:1018px;height:1px;background:#A0A0A0"></div>
<div class="t" style="left:3px;top:20px;width:24px;height:18px;line-height:18px;font-size:11.3px;overflow:hidden">001</div>
<div style="left:27px;top:20px;width:1px;height:19px;background:#A0A0A0"></div>
<div class="t" style="left:29px;top:20px;width:73px;height:18px;line-height:18px;font-size:11.3px;overflow:hidden">FA001007110</div>
<div style="left:103px;top:20px;width:1px;height:19px;background:#A0A0A0"></div>
<div class="t" style="left:106px;top:20px;width:74px;height:18px;line-height:18px;font-size:11.3px;overflow:hidden">14.03.23</div>
<div style="left:180px;top:20px;width:1px;height:19px;background:#A0A0A0"></div>
<div style="left:248px;top:20px;width:1px;height:19px;background:#A0A0A0"></div>
<div class="t" style="left:250px;top:20px;width:37px;height:18px;line-height:18px;font-size:11.3px;overflow:hidden">03338</div>
<div style="left:288px;top:20px;width:1px;height:19px;background:#A0A0A0"></div>
<div class="t" style="left:290px;top:20px;width:169px;height:18px;line-height:18px;font-size:10.6px;letter-spacing:-0.1px;overflow:hidden">DOO"VISITOR" ODZACI</div>
<div style="left:460px;top:20px;width:1px;height:19px;background:#A0A0A0"></div>
<div class="t" style="left:462px;top:20px;width:80px;height:18px;line-height:18px;font-size:10.8px;letter-spacing:-0.2px;overflow:hidden">ORDER_1051001</div>
<div style="left:543px;top:20px;width:1px;height:19px;background:#A0A0A0"></div>
<div style="left:613px;top:20px;width:1px;height:19px;background:#A0A0A0"></div>
<div class="t" style="left:616px;top:20px;width:67px;height:18px;line-height:18px;font-size:11.3px;overflow:hidden">14.03.23</div>
<div style="left:683px;top:20px;width:1px;height:19px;background:#A0A0A0"></div>
<div class="t" style="left:685px;top:20px;width:77px;height:18px;line-height:18px;font-size:10.6px;letter-spacing:-0.25px;overflow:hidden">TEREN 5  VRNJACKA</div>
<div style="left:763px;top:20px;width:1px;height:19px;background:#A0A0A0"></div>
<div style="left:785px;top:20px;width:1px;height:19px;background:#A0A0A0"></div>
<svg style="left:791px;top:22px" width="16" height="16"><path d="M0.5 13.5V0.5H8L11.5 4V7.5M0.5 13.5H5" fill="none" stroke="#707070" stroke-width="1"/><path d="M8 0.5V4H11.5" fill="none" stroke="#707070" stroke-width="1"/><path d="M6 15.5L6.6 12.2L12.6 6.2L15 8.6L9 14.6Z" fill="#3A78C0"/><path d="M7.2 12.2L9.6 14.6M11.4 7.4L13.8 9.8" stroke="#fff" stroke-width="0.8"/></svg>
<div class="t" style="left:809px;top:20px;width:23px;height:18px;line-height:18px;font-size:11.3px;overflow:hidden">01</div>
<div style="left:833px;top:20px;width:1px;height:19px;background:#A0A0A0"></div>
<div class="t" style="left:834px;top:20px;width:74px;height:18px;line-height:18px;font-size:11.3px;text-align:right;overflow:hidden">18.651,56</div>
<div style="left:911px;top:20px;width:1px;height:19px;background:#A0A0A0"></div>
<div class="t" style="left:912px;top:20px;width:65px;height:18px;line-height:18px;font-size:11.3px;text-align:right;overflow:hidden">2.999,23</div>
<div style="left:980px;top:20px;width:1px;height:19px;background:#A0A0A0"></div>
<svg style="left:986px;top:22px" width="16" height="16"><path d="M0.5 13.5V0.5H8L11.5 4V7.5M0.5 13.5H5" fill="none" stroke="#707070" stroke-width="1"/><path d="M8 0.5V4H11.5" fill="none" stroke="#707070" stroke-width="1"/><path d="M6 15.5L6.6 12.2L12.6 6.2L15 8.6L9 14.6Z" fill="#3A78C0"/><path d="M7.2 12.2L9.6 14.6M11.4 7.4L13.8 9.8" stroke="#fff" stroke-width="0.8"/></svg>
<div class="t" style="left:1004px;top:20px;width:13px;height:18px;line-height:18px;font-size:11.3px;overflow:hidden">U r</div>
<div style="left:0px;top:57px;width:1018px;height:1px;background:#A0A0A0"></div>
<div class="t" style="left:3px;top:39px;width:24px;height:18px;line-height:18px;font-size:11.3px;overflow:hidden">001</div>
<div style="left:27px;top:39px;width:1px;height:19px;background:#A0A0A0"></div>
<div class="t" style="left:29px;top:39px;width:73px;height:18px;line-height:18px;font-size:11.3px;overflow:hidden">FA001007111</div>
<div style="left:103px;top:39px;width:1px;height:19px;background:#A0A0A0"></div>
<div class="t" style="left:106px;top:39px;width:74px;height:18px;line-height:18px;font-size:11.3px;overflow:hidden">15.03.23</div>
<div style="left:180px;top:39px;width:1px;height:19px;background:#A0A0A0"></div>
<div style="left:248px;top:39px;width:1px;height:19px;background:#A0A0A0"></div>
<div class="t" style="left:250px;top:39px;width:37px;height:18px;line-height:18px;font-size:11.3px;overflow:hidden">01855</div>
<div style="left:288px;top:39px;width:1px;height:19px;background:#A0A0A0"></div>
<div class="t" style="left:290px;top:39px;width:169px;height:18px;line-height:18px;font-size:10.6px;letter-spacing:-0.1px;overflow:hidden">TR"KAPETANOVINA 1" UZICE</div>
<div style="left:460px;top:39px;width:1px;height:19px;background:#A0A0A0"></div>
<div class="t" style="left:462px;top:39px;width:80px;height:18px;line-height:18px;font-size:10.8px;letter-spacing:-0.2px;overflow:hidden">ORDER_1054001</div>
<div style="left:543px;top:39px;width:1px;height:19px;background:#A0A0A0"></div>
<div style="left:613px;top:39px;width:1px;height:19px;background:#A0A0A0"></div>
<div class="t" style="left:616px;top:39px;width:67px;height:18px;line-height:18px;font-size:11.3px;overflow:hidden">15.03.23</div>
<div style="left:683px;top:39px;width:1px;height:19px;background:#A0A0A0"></div>
<div class="t" style="left:685px;top:39px;width:77px;height:18px;line-height:18px;font-size:10.6px;letter-spacing:-0.25px;overflow:hidden">SMS TEREN 68</div>
<div style="left:763px;top:39px;width:1px;height:19px;background:#A0A0A0"></div>
<div style="left:785px;top:39px;width:1px;height:19px;background:#A0A0A0"></div>
<svg style="left:791px;top:41px" width="16" height="16"><path d="M0.5 13.5V0.5H8L11.5 4V7.5M0.5 13.5H5" fill="none" stroke="#707070" stroke-width="1"/><path d="M8 0.5V4H11.5" fill="none" stroke="#707070" stroke-width="1"/><path d="M6 15.5L6.6 12.2L12.6 6.2L15 8.6L9 14.6Z" fill="#3A78C0"/><path d="M7.2 12.2L9.6 14.6M11.4 7.4L13.8 9.8" stroke="#fff" stroke-width="0.8"/></svg>
<div class="t" style="left:809px;top:39px;width:23px;height:18px;line-height:18px;font-size:11.3px;overflow:hidden">01</div>
<div style="left:833px;top:39px;width:1px;height:19px;background:#A0A0A0"></div>
<div class="t" style="left:834px;top:39px;width:74px;height:18px;line-height:18px;font-size:11.3px;text-align:right;overflow:hidden">8.552,30</div>
<div style="left:911px;top:39px;width:1px;height:19px;background:#A0A0A0"></div>
<div class="t" style="left:912px;top:39px;width:65px;height:18px;line-height:18px;font-size:11.3px;text-align:right;overflow:hidden">1.154,61</div>
<div style="left:980px;top:39px;width:1px;height:19px;background:#A0A0A0"></div>
<svg style="left:986px;top:41px" width="16" height="16"><path d="M0.5 13.5V0.5H8L11.5 4V7.5M0.5 13.5H5" fill="none" stroke="#707070" stroke-width="1"/><path d="M8 0.5V4H11.5" fill="none" stroke="#707070" stroke-width="1"/><path d="M6 15.5L6.6 12.2L12.6 6.2L15 8.6L9 14.6Z" fill="#3A78C0"/><path d="M7.2 12.2L9.6 14.6M11.4 7.4L13.8 9.8" stroke="#fff" stroke-width="0.8"/></svg>
<div class="t" style="left:1004px;top:39px;width:13px;height:18px;line-height:18px;font-size:11.3px;overflow:hidden">U r</div>
<div style="left:0px;top:76px;width:1018px;height:1px;background:#A0A0A0"></div>
<div class="t" style="left:3px;top:58px;width:24px;height:18px;line-height:18px;font-size:11.3px;overflow:hidden">001</div>
<div style="left:27px;top:58px;width:1px;height:19px;background:#A0A0A0"></div>
<div class="t" style="left:29px;top:58px;width:73px;height:18px;line-height:18px;font-size:11.3px;overflow:hidden">FA001007114</div>
<div style="left:103px;top:58px;width:1px;height:19px;background:#A0A0A0"></div>
<div class="t" style="left:106px;top:58px;width:74px;height:18px;line-height:18px;font-size:11.3px;overflow:hidden">15.03.23</div>
<div style="left:180px;top:58px;width:1px;height:19px;background:#A0A0A0"></div>
<div style="left:248px;top:58px;width:1px;height:19px;background:#A0A0A0"></div>
<div class="t" style="left:250px;top:58px;width:37px;height:18px;line-height:18px;font-size:11.3px;overflow:hidden">03564</div>
<div style="left:288px;top:58px;width:1px;height:19px;background:#A0A0A0"></div>
<div class="t" style="left:290px;top:58px;width:169px;height:18px;line-height:18px;font-size:10.6px;letter-spacing:-0.1px;overflow:hidden">DOO"STING"JAGODINA</div>
<div style="left:460px;top:58px;width:1px;height:19px;background:#A0A0A0"></div>
<div class="t" style="left:462px;top:58px;width:80px;height:18px;line-height:18px;font-size:10.8px;letter-spacing:-0.2px;overflow:hidden">ORDER_1040001</div>
<div style="left:543px;top:58px;width:1px;height:19px;background:#A0A0A0"></div>
<div style="left:613px;top:58px;width:1px;height:19px;background:#A0A0A0"></div>
<div class="t" style="left:616px;top:58px;width:67px;height:18px;line-height:18px;font-size:11.3px;overflow:hidden">15.03.23</div>
<div style="left:683px;top:58px;width:1px;height:19px;background:#A0A0A0"></div>
<div class="t" style="left:685px;top:58px;width:77px;height:18px;line-height:18px;font-size:10.6px;letter-spacing:-0.25px;overflow:hidden">TEREN 19   JAGODINA</div>
<div style="left:763px;top:58px;width:1px;height:19px;background:#A0A0A0"></div>
<div style="left:785px;top:58px;width:1px;height:19px;background:#A0A0A0"></div>
<svg style="left:791px;top:60px" width="16" height="16"><path d="M0.5 13.5V0.5H8L11.5 4V7.5M0.5 13.5H5" fill="none" stroke="#707070" stroke-width="1"/><path d="M8 0.5V4H11.5" fill="none" stroke="#707070" stroke-width="1"/><path d="M6 15.5L6.6 12.2L12.6 6.2L15 8.6L9 14.6Z" fill="#3A78C0"/><path d="M7.2 12.2L9.6 14.6M11.4 7.4L13.8 9.8" stroke="#fff" stroke-width="0.8"/></svg>
<div class="t" style="left:809px;top:58px;width:23px;height:18px;line-height:18px;font-size:11.3px;overflow:hidden">01</div>
<div style="left:833px;top:58px;width:1px;height:19px;background:#A0A0A0"></div>
<div class="t" style="left:834px;top:58px;width:74px;height:18px;line-height:18px;font-size:11.3px;text-align:right;overflow:hidden">5.965,13</div>
<div style="left:911px;top:58px;width:1px;height:19px;background:#A0A0A0"></div>
<div class="t" style="left:912px;top:58px;width:65px;height:18px;line-height:18px;font-size:11.3px;text-align:right;overflow:hidden">927,19</div>
<div style="left:980px;top:58px;width:1px;height:19px;background:#A0A0A0"></div>
<svg style="left:986px;top:60px" width="16" height="16"><path d="M0.5 13.5V0.5H8L11.5 4V7.5M0.5 13.5H5" fill="none" stroke="#707070" stroke-width="1"/><path d="M8 0.5V4H11.5" fill="none" stroke="#707070" stroke-width="1"/><path d="M6 15.5L6.6 12.2L12.6 6.2L15 8.6L9 14.6Z" fill="#3A78C0"/><path d="M7.2 12.2L9.6 14.6M11.4 7.4L13.8 9.8" stroke="#fff" stroke-width="0.8"/></svg>
<div class="t" style="left:1004px;top:58px;width:13px;height:18px;line-height:18px;font-size:11.3px;overflow:hidden">U r</div>
<div style="left:0px;top:95px;width:1018px;height:1px;background:#A0A0A0"></div>
<div class="t" style="left:3px;top:77px;width:24px;height:18px;line-height:18px;font-size:11.3px;overflow:hidden">001</div>
<div style="left:27px;top:77px;width:1px;height:19px;background:#A0A0A0"></div>
<div class="t" style="left:29px;top:77px;width:73px;height:18px;line-height:18px;font-size:11.3px;overflow:hidden">FA001007117</div>
<div style="left:103px;top:77px;width:1px;height:19px;background:#A0A0A0"></div>
<div class="t" style="left:106px;top:77px;width:74px;height:18px;line-height:18px;font-size:11.3px;overflow:hidden">14.03.23</div>
<div style="left:180px;top:77px;width:1px;height:19px;background:#A0A0A0"></div>
<div style="left:248px;top:77px;width:1px;height:19px;background:#A0A0A0"></div>
<div class="t" style="left:250px;top:77px;width:37px;height:18px;line-height:18px;font-size:11.3px;overflow:hidden">00412</div>
<div style="left:288px;top:77px;width:1px;height:19px;background:#A0A0A0"></div>
<div class="t" style="left:290px;top:77px;width:169px;height:18px;line-height:18px;font-size:10.6px;letter-spacing:-0.1px;overflow:hidden">STR"JABUKA" KRALJEVO</div>
<div style="left:460px;top:77px;width:1px;height:19px;background:#A0A0A0"></div>
<div class="t" style="left:462px;top:77px;width:80px;height:18px;line-height:18px;font-size:10.8px;letter-spacing:-0.2px;overflow:hidden">ORDER_104900</div>
<div style="left:543px;top:77px;width:1px;height:19px;background:#A0A0A0"></div>
<div style="left:613px;top:77px;width:1px;height:19px;background:#A0A0A0"></div>
<div class="t" style="left:616px;top:77px;width:67px;height:18px;line-height:18px;font-size:11.3px;overflow:hidden">14.03.23</div>
<div style="left:683px;top:77px;width:1px;height:19px;background:#A0A0A0"></div>
<div class="t" style="left:685px;top:77px;width:77px;height:18px;line-height:18px;font-size:10.6px;letter-spacing:-0.25px;overflow:hidden">TEREN 4   KRALJEVO</div>
<div style="left:763px;top:77px;width:1px;height:19px;background:#A0A0A0"></div>
<div style="left:785px;top:77px;width:1px;height:19px;background:#A0A0A0"></div>
<svg style="left:791px;top:79px" width="16" height="16"><path d="M0.5 13.5V0.5H8L11.5 4V7.5M0.5 13.5H5" fill="none" stroke="#707070" stroke-width="1"/><path d="M8 0.5V4H11.5" fill="none" stroke="#707070" stroke-width="1"/><path d="M6 15.5L6.6 12.2L12.6 6.2L15 8.6L9 14.6Z" fill="#3A78C0"/><path d="M7.2 12.2L9.6 14.6M11.4 7.4L13.8 9.8" stroke="#fff" stroke-width="0.8"/></svg>
<div class="t" style="left:809px;top:77px;width:23px;height:18px;line-height:18px;font-size:11.3px;overflow:hidden">01</div>
<div style="left:833px;top:77px;width:1px;height:19px;background:#A0A0A0"></div>
<div class="t" style="left:834px;top:77px;width:74px;height:18px;line-height:18px;font-size:11.3px;text-align:right;overflow:hidden">7.246,60</div>
<div style="left:911px;top:77px;width:1px;height:19px;background:#A0A0A0"></div>
<div class="t" style="left:912px;top:77px;width:65px;height:18px;line-height:18px;font-size:11.3px;text-align:right;overflow:hidden">1.207,77</div>
<div style="left:980px;top:77px;width:1px;height:19px;background:#A0A0A0"></div>
<svg style="left:986px;top:79px" width="16" height="16"><path d="M0.5 13.5V0.5H8L11.5 4V7.5M0.5 13.5H5" fill="none" stroke="#707070" stroke-width="1"/><path d="M8 0.5V4H11.5" fill="none" stroke="#707070" stroke-width="1"/><path d="M6 15.5L6.6 12.2L12.6 6.2L15 8.6L9 14.6Z" fill="#3A78C0"/><path d="M7.2 12.2L9.6 14.6M11.4 7.4L13.8 9.8" stroke="#fff" stroke-width="0.8"/></svg>
<div class="t" style="left:1004px;top:77px;width:13px;height:18px;line-height:18px;font-size:11.3px;overflow:hidden">U r</div>
<div style="left:0px;top:96px;width:1018px;height:18px;background:#E4E4E4"></div>
<div style="left:104px;top:96px;width:76px;height:18px;background:#fff"></div>
<div style="left:0px;top:114px;width:1018px;height:1px;background:#A0A0A0"></div>
<div class="t" style="left:3px;top:96px;width:24px;height:18px;line-height:18px;font-size:11.3px;overflow:hidden">001</div>
<div style="left:27px;top:96px;width:1px;height:19px;background:#A0A0A0"></div>
<div class="t" style="left:29px;top:96px;width:73px;height:18px;line-height:18px;font-size:11.3px;overflow:hidden">FA001007118</div>
<div style="left:103px;top:96px;width:1px;height:19px;background:#A0A0A0"></div>
<div class="t" style="left:106px;top:96px;width:74px;height:18px;line-height:18px;font-size:11.3px;overflow:hidden">14.03.23</div>
<div style="left:180px;top:96px;width:1px;height:19px;background:#A0A0A0"></div>
<div style="left:248px;top:96px;width:1px;height:19px;background:#A0A0A0"></div>
<div class="t" style="left:250px;top:96px;width:37px;height:18px;line-height:18px;font-size:11.3px;overflow:hidden">00059</div>
<div style="left:288px;top:96px;width:1px;height:19px;background:#A0A0A0"></div>
<div class="t" style="left:290px;top:96px;width:169px;height:18px;line-height:18px;font-size:10.6px;letter-spacing:-0.1px;overflow:hidden">STR"POPOVIĆ" KRAGUJEVAC</div>
<div style="left:460px;top:96px;width:1px;height:19px;background:#A0A0A0"></div>
<div class="t" style="left:462px;top:96px;width:80px;height:18px;line-height:18px;font-size:10.8px;letter-spacing:-0.2px;overflow:hidden">ORDER_105200</div>
<div style="left:543px;top:96px;width:1px;height:19px;background:#A0A0A0"></div>
<div style="left:613px;top:96px;width:1px;height:19px;background:#A0A0A0"></div>
<div class="t" style="left:616px;top:96px;width:67px;height:18px;line-height:18px;font-size:11.3px;overflow:hidden">14.03.23</div>
<div style="left:683px;top:96px;width:1px;height:19px;background:#A0A0A0"></div>
<div class="t" style="left:685px;top:96px;width:77px;height:18px;line-height:18px;font-size:10.6px;letter-spacing:-0.25px;overflow:hidden">TEREN 2</div>
<div style="left:763px;top:96px;width:1px;height:19px;background:#A0A0A0"></div>
<div style="left:785px;top:96px;width:1px;height:19px;background:#A0A0A0"></div>
<svg style="left:791px;top:98px" width="16" height="16"><path d="M0.5 13.5V0.5H8L11.5 4V7.5M0.5 13.5H5" fill="none" stroke="#707070" stroke-width="1"/><path d="M8 0.5V4H11.5" fill="none" stroke="#707070" stroke-width="1"/><path d="M6 15.5L6.6 12.2L12.6 6.2L15 8.6L9 14.6Z" fill="#3A78C0"/><path d="M7.2 12.2L9.6 14.6M11.4 7.4L13.8 9.8" stroke="#fff" stroke-width="0.8"/></svg>
<div class="t" style="left:809px;top:96px;width:23px;height:18px;line-height:18px;font-size:11.3px;overflow:hidden">01</div>
<div style="left:833px;top:96px;width:1px;height:19px;background:#A0A0A0"></div>
<div class="t" style="left:834px;top:96px;width:74px;height:18px;line-height:18px;font-size:11.3px;text-align:right;overflow:hidden">11.590,38</div>
<div style="left:911px;top:96px;width:1px;height:19px;background:#A0A0A0"></div>
<div class="t" style="left:912px;top:96px;width:65px;height:18px;line-height:18px;font-size:11.3px;text-align:right;overflow:hidden">1.823,74</div>
<div style="left:980px;top:96px;width:1px;height:19px;background:#A0A0A0"></div>
<svg style="left:986px;top:98px" width="16" height="16"><path d="M0.5 13.5V0.5H8L11.5 4V7.5M0.5 13.5H5" fill="none" stroke="#707070" stroke-width="1"/><path d="M8 0.5V4H11.5" fill="none" stroke="#707070" stroke-width="1"/><path d="M6 15.5L6.6 12.2L12.6 6.2L15 8.6L9 14.6Z" fill="#3A78C0"/><path d="M7.2 12.2L9.6 14.6M11.4 7.4L13.8 9.8" stroke="#fff" stroke-width="0.8"/></svg>
<div class="t" style="left:1004px;top:96px;width:13px;height:18px;line-height:18px;font-size:11.3px;overflow:hidden">U r</div>
<div style="left:0px;top:133px;width:1018px;height:1px;background:#A0A0A0"></div>
<div class="t" style="left:3px;top:115px;width:24px;height:18px;line-height:18px;font-size:11.3px;overflow:hidden">001</div>
<div style="left:27px;top:115px;width:1px;height:19px;background:#A0A0A0"></div>
<div class="t" style="left:29px;top:115px;width:73px;height:18px;line-height:18px;font-size:11.3px;overflow:hidden">FA001007119</div>
<div style="left:103px;top:115px;width:1px;height:19px;background:#A0A0A0"></div>
<div class="t" style="left:106px;top:115px;width:74px;height:18px;line-height:18px;font-size:11.3px;overflow:hidden">18.03.23</div>
<div style="left:180px;top:115px;width:1px;height:19px;background:#A0A0A0"></div>
<div style="left:248px;top:115px;width:1px;height:19px;background:#A0A0A0"></div>
<div class="t" style="left:250px;top:115px;width:37px;height:18px;line-height:18px;font-size:11.3px;overflow:hidden">03372</div>
<div style="left:288px;top:115px;width:1px;height:19px;background:#A0A0A0"></div>
<div class="t" style="left:290px;top:115px;width:169px;height:18px;line-height:18px;font-size:10.6px;letter-spacing:-0.1px;overflow:hidden">" QVATTRO COMPANY" DOO  NOVI SAD</div>
<div style="left:460px;top:115px;width:1px;height:19px;background:#A0A0A0"></div>
<div class="t" style="left:462px;top:115px;width:80px;height:18px;line-height:18px;font-size:10.8px;letter-spacing:-0.2px;overflow:hidden">ORDER_105300</div>
<div style="left:543px;top:115px;width:1px;height:19px;background:#A0A0A0"></div>
<div style="left:613px;top:115px;width:1px;height:19px;background:#A0A0A0"></div>
<div class="t" style="left:616px;top:115px;width:67px;height:18px;line-height:18px;font-size:11.3px;overflow:hidden">18.03.23</div>
<div style="left:683px;top:115px;width:1px;height:19px;background:#A0A0A0"></div>
<div class="t" style="left:685px;top:115px;width:77px;height:18px;line-height:18px;font-size:10.6px;letter-spacing:-0.25px;overflow:hidden">SMS TEREN 6</div>
<div style="left:763px;top:115px;width:1px;height:19px;background:#A0A0A0"></div>
<div style="left:785px;top:115px;width:1px;height:19px;background:#A0A0A0"></div>
<svg style="left:791px;top:117px" width="16" height="16"><path d="M0.5 13.5V0.5H8L11.5 4V7.5M0.5 13.5H5" fill="none" stroke="#707070" stroke-width="1"/><path d="M8 0.5V4H11.5" fill="none" stroke="#707070" stroke-width="1"/><path d="M6 15.5L6.6 12.2L12.6 6.2L15 8.6L9 14.6Z" fill="#3A78C0"/><path d="M7.2 12.2L9.6 14.6M11.4 7.4L13.8 9.8" stroke="#fff" stroke-width="0.8"/></svg>
<div class="t" style="left:809px;top:115px;width:23px;height:18px;line-height:18px;font-size:11.3px;overflow:hidden">01</div>
<div style="left:833px;top:115px;width:1px;height:19px;background:#A0A0A0"></div>
<div class="t" style="left:834px;top:115px;width:74px;height:18px;line-height:18px;font-size:11.3px;text-align:right;overflow:hidden">38.373,15</div>
<div style="left:911px;top:115px;width:1px;height:19px;background:#A0A0A0"></div>
<div class="t" style="left:912px;top:115px;width:65px;height:18px;line-height:18px;font-size:11.3px;text-align:right;overflow:hidden">6.395,52</div>
<div style="left:980px;top:115px;width:1px;height:19px;background:#A0A0A0"></div>
<svg style="left:986px;top:117px" width="16" height="16"><path d="M0.5 13.5V0.5H8L11.5 4V7.5M0.5 13.5H5" fill="none" stroke="#707070" stroke-width="1"/><path d="M8 0.5V4H11.5" fill="none" stroke="#707070" stroke-width="1"/><path d="M6 15.5L6.6 12.2L12.6 6.2L15 8.6L9 14.6Z" fill="#3A78C0"/><path d="M7.2 12.2L9.6 14.6M11.4 7.4L13.8 9.8" stroke="#fff" stroke-width="0.8"/></svg>
<div class="t" style="left:1004px;top:115px;width:13px;height:18px;line-height:18px;font-size:11.3px;overflow:hidden">U r</div>
<div style="left:0px;top:152px;width:1018px;height:1px;background:#A0A0A0"></div>
<div class="t" style="left:3px;top:134px;width:24px;height:18px;line-height:18px;font-size:11.3px;overflow:hidden">001</div>
<div style="left:27px;top:134px;width:1px;height:19px;background:#A0A0A0"></div>
<div class="t" style="left:29px;top:134px;width:73px;height:18px;line-height:18px;font-size:11.3px;overflow:hidden">FA001007120</div>
<div style="left:103px;top:134px;width:1px;height:19px;background:#A0A0A0"></div>
<div class="t" style="left:106px;top:134px;width:74px;height:18px;line-height:18px;font-size:11.3px;overflow:hidden">15.03.23</div>
<div style="left:180px;top:134px;width:1px;height:19px;background:#A0A0A0"></div>
<div style="left:248px;top:134px;width:1px;height:19px;background:#A0A0A0"></div>
<div class="t" style="left:250px;top:134px;width:37px;height:18px;line-height:18px;font-size:11.3px;overflow:hidden">04100</div>
<div style="left:288px;top:134px;width:1px;height:19px;background:#A0A0A0"></div>
<div class="t" style="left:290px;top:134px;width:169px;height:18px;line-height:18px;font-size:10.6px;letter-spacing:-0.1px;overflow:hidden">TR"ALBOS"BEOGRAD</div>
<div style="left:460px;top:134px;width:1px;height:19px;background:#A0A0A0"></div>
<div class="t" style="left:462px;top:134px;width:80px;height:18px;line-height:18px;font-size:10.8px;letter-spacing:-0.2px;overflow:hidden">ORDER_105300</div>
<div style="left:543px;top:134px;width:1px;height:19px;background:#A0A0A0"></div>
<div style="left:613px;top:134px;width:1px;height:19px;background:#A0A0A0"></div>
<div class="t" style="left:616px;top:134px;width:67px;height:18px;line-height:18px;font-size:11.3px;overflow:hidden">15.03.23</div>
<div style="left:683px;top:134px;width:1px;height:19px;background:#A0A0A0"></div>
<div class="t" style="left:685px;top:134px;width:77px;height:18px;line-height:18px;font-size:10.6px;letter-spacing:-0.25px;overflow:hidden">SMS TEREN 14</div>
<div style="left:763px;top:134px;width:1px;height:19px;background:#A0A0A0"></div>
<div style="left:785px;top:134px;width:1px;height:19px;background:#A0A0A0"></div>
<svg style="left:791px;top:136px" width="16" height="16"><path d="M0.5 13.5V0.5H8L11.5 4V7.5M0.5 13.5H5" fill="none" stroke="#707070" stroke-width="1"/><path d="M8 0.5V4H11.5" fill="none" stroke="#707070" stroke-width="1"/><path d="M6 15.5L6.6 12.2L12.6 6.2L15 8.6L9 14.6Z" fill="#3A78C0"/><path d="M7.2 12.2L9.6 14.6M11.4 7.4L13.8 9.8" stroke="#fff" stroke-width="0.8"/></svg>
<div class="t" style="left:809px;top:134px;width:23px;height:18px;line-height:18px;font-size:11.3px;overflow:hidden">01</div>
<div style="left:833px;top:134px;width:1px;height:19px;background:#A0A0A0"></div>
<div class="t" style="left:834px;top:134px;width:74px;height:18px;line-height:18px;font-size:11.3px;text-align:right;overflow:hidden">129.600,00</div>
<div style="left:911px;top:134px;width:1px;height:19px;background:#A0A0A0"></div>
<div class="t" style="left:912px;top:134px;width:65px;height:18px;line-height:18px;font-size:11.3px;text-align:right;overflow:hidden">21.600,00</div>
<div style="left:980px;top:134px;width:1px;height:19px;background:#A0A0A0"></div>
<svg style="left:986px;top:136px" width="16" height="16"><path d="M0.5 13.5V0.5H8L11.5 4V7.5M0.5 13.5H5" fill="none" stroke="#707070" stroke-width="1"/><path d="M8 0.5V4H11.5" fill="none" stroke="#707070" stroke-width="1"/><path d="M6 15.5L6.6 12.2L12.6 6.2L15 8.6L9 14.6Z" fill="#3A78C0"/><path d="M7.2 12.2L9.6 14.6M11.4 7.4L13.8 9.8" stroke="#fff" stroke-width="0.8"/></svg>
<div class="t" style="left:1004px;top:134px;width:13px;height:18px;line-height:18px;font-size:11.3px;overflow:hidden">U r</div>
<div style="left:0px;top:171px;width:1018px;height:1px;background:#A0A0A0"></div>
<div class="t" style="left:3px;top:153px;width:24px;height:18px;line-height:18px;font-size:11.3px;overflow:hidden">001</div>
<div style="left:27px;top:153px;width:1px;height:19px;background:#A0A0A0"></div>
<div class="t" style="left:29px;top:153px;width:73px;height:18px;line-height:18px;font-size:11.3px;overflow:hidden">FA001007121</div>
<div style="left:103px;top:153px;width:1px;height:19px;background:#A0A0A0"></div>
<div class="t" style="left:106px;top:153px;width:74px;height:18px;line-height:18px;font-size:11.3px;overflow:hidden">14.03.23</div>
<div style="left:180px;top:153px;width:1px;height:19px;background:#A0A0A0"></div>
<div style="left:248px;top:153px;width:1px;height:19px;background:#A0A0A0"></div>
<div class="t" style="left:250px;top:153px;width:37px;height:18px;line-height:18px;font-size:11.3px;overflow:hidden">03701</div>
<div style="left:288px;top:153px;width:1px;height:19px;background:#A0A0A0"></div>
<div class="t" style="left:290px;top:153px;width:169px;height:18px;line-height:18px;font-size:10.6px;letter-spacing:-0.1px;overflow:hidden">DOO "IKA JUNIOR" BEOGRAD</div>
<div style="left:460px;top:153px;width:1px;height:19px;background:#A0A0A0"></div>
<div class="t" style="left:462px;top:153px;width:80px;height:18px;line-height:18px;font-size:10.8px;letter-spacing:-0.2px;overflow:hidden">ORDER_1050001</div>
<div style="left:543px;top:153px;width:1px;height:19px;background:#A0A0A0"></div>
<div style="left:613px;top:153px;width:1px;height:19px;background:#A0A0A0"></div>
<div class="t" style="left:616px;top:153px;width:67px;height:18px;line-height:18px;font-size:11.3px;overflow:hidden">14.03.23</div>
<div style="left:683px;top:153px;width:1px;height:19px;background:#A0A0A0"></div>
<div class="t" style="left:685px;top:153px;width:77px;height:18px;line-height:18px;font-size:10.6px;letter-spacing:-0.25px;overflow:hidden">TEREN 1</div>
<div style="left:763px;top:153px;width:1px;height:19px;background:#A0A0A0"></div>
<div style="left:785px;top:153px;width:1px;height:19px;background:#A0A0A0"></div>
<svg style="left:791px;top:155px" width="16" height="16"><path d="M0.5 13.5V0.5H8L11.5 4V7.5M0.5 13.5H5" fill="none" stroke="#707070" stroke-width="1"/><path d="M8 0.5V4H11.5" fill="none" stroke="#707070" stroke-width="1"/><path d="M6 15.5L6.6 12.2L12.6 6.2L15 8.6L9 14.6Z" fill="#3A78C0"/><path d="M7.2 12.2L9.6 14.6M11.4 7.4L13.8 9.8" stroke="#fff" stroke-width="0.8"/></svg>
<div class="t" style="left:809px;top:153px;width:23px;height:18px;line-height:18px;font-size:11.3px;overflow:hidden">01</div>
<div style="left:833px;top:153px;width:1px;height:19px;background:#A0A0A0"></div>
<div class="t" style="left:834px;top:153px;width:74px;height:18px;line-height:18px;font-size:11.3px;text-align:right;overflow:hidden">7.893,78</div>
<div style="left:911px;top:153px;width:1px;height:19px;background:#A0A0A0"></div>
<div class="t" style="left:912px;top:153px;width:65px;height:18px;line-height:18px;font-size:11.3px;text-align:right;overflow:hidden">1.188,94</div>
<div style="left:980px;top:153px;width:1px;height:19px;background:#A0A0A0"></div>
<svg style="left:986px;top:155px" width="16" height="16"><path d="M0.5 13.5V0.5H8L11.5 4V7.5M0.5 13.5H5" fill="none" stroke="#707070" stroke-width="1"/><path d="M8 0.5V4H11.5" fill="none" stroke="#707070" stroke-width="1"/><path d="M6 15.5L6.6 12.2L12.6 6.2L15 8.6L9 14.6Z" fill="#3A78C0"/><path d="M7.2 12.2L9.6 14.6M11.4 7.4L13.8 9.8" stroke="#fff" stroke-width="0.8"/></svg>
<div class="t" style="left:1004px;top:153px;width:13px;height:18px;line-height:18px;font-size:11.3px;overflow:hidden">U r</div>
<div style="left:0px;top:190px;width:1018px;height:1px;background:#A0A0A0"></div>
<div class="t" style="left:3px;top:172px;width:24px;height:18px;line-height:18px;font-size:11.3px;overflow:hidden">001</div>
<div style="left:27px;top:172px;width:1px;height:19px;background:#A0A0A0"></div>
<div class="t" style="left:29px;top:172px;width:73px;height:18px;line-height:18px;font-size:11.3px;overflow:hidden">FA001007127</div>
<div style="left:103px;top:172px;width:1px;height:19px;background:#A0A0A0"></div>
<div class="t" style="left:106px;top:172px;width:74px;height:18px;line-height:18px;font-size:11.3px;overflow:hidden">15.09.23</div>
<div style="left:180px;top:172px;width:1px;height:19px;background:#A0A0A0"></div>
<div class="t" style="left:182px;top:172px;width:65px;height:18px;line-height:18px;font-size:11.3px;overflow:hidden">15.09.23</div>
<div style="left:248px;top:172px;width:1px;height:19px;background:#A0A0A0"></div>
<div class="t" style="left:250px;top:172px;width:37px;height:18px;line-height:18px;font-size:11.3px;overflow:hidden">00004</div>
<div style="left:288px;top:172px;width:1px;height:19px;background:#A0A0A0"></div>
<div class="t" style="left:290px;top:172px;width:169px;height:18px;line-height:18px;font-size:10.6px;letter-spacing:-0.1px;overflow:hidden">DOO"PEPITO" KRAGUJEVAC</div>
<div style="left:460px;top:172px;width:1px;height:19px;background:#A0A0A0"></div>
<div class="t" style="left:462px;top:172px;width:80px;height:18px;line-height:18px;font-size:10.8px;letter-spacing:-0.2px;overflow:hidden">ORDER_ASDASD</div>
<div style="left:543px;top:172px;width:1px;height:19px;background:#A0A0A0"></div>
<div style="left:613px;top:172px;width:1px;height:19px;background:#A0A0A0"></div>
<div class="t" style="left:616px;top:172px;width:67px;height:18px;line-height:18px;font-size:11.3px;overflow:hidden">15.09.23</div>
<div style="left:683px;top:172px;width:1px;height:19px;background:#A0A0A0"></div>
<div class="t" style="left:685px;top:172px;width:77px;height:18px;line-height:18px;font-size:10.6px;letter-spacing:-0.25px;overflow:hidden">Lično preuzimanje</div>
<div style="left:763px;top:172px;width:1px;height:19px;background:#A0A0A0"></div>
<div style="left:785px;top:172px;width:1px;height:19px;background:#A0A0A0"></div>
<svg style="left:791px;top:174px" width="16" height="16"><path d="M0.5 13.5V0.5H8L11.5 4V7.5M0.5 13.5H5" fill="none" stroke="#707070" stroke-width="1"/><path d="M8 0.5V4H11.5" fill="none" stroke="#707070" stroke-width="1"/><path d="M6 15.5L6.6 12.2L12.6 6.2L15 8.6L9 14.6Z" fill="#3A78C0"/><path d="M7.2 12.2L9.6 14.6M11.4 7.4L13.8 9.8" stroke="#fff" stroke-width="0.8"/></svg>
<div class="t" style="left:809px;top:172px;width:23px;height:18px;line-height:18px;font-size:11.3px;overflow:hidden">01</div>
<div style="left:833px;top:172px;width:1px;height:19px;background:#A0A0A0"></div>
<div class="t" style="left:834px;top:172px;width:74px;height:18px;line-height:18px;font-size:11.3px;text-align:right;overflow:hidden">687,50</div>
<div style="left:911px;top:172px;width:1px;height:19px;background:#A0A0A0"></div>
<div class="t" style="left:912px;top:172px;width:65px;height:18px;line-height:18px;font-size:11.3px;text-align:right;overflow:hidden">62,50</div>
<div style="left:980px;top:172px;width:1px;height:19px;background:#A0A0A0"></div>
<svg style="left:986px;top:174px" width="16" height="16"><path d="M0.5 13.5V0.5H8L11.5 4V7.5M0.5 13.5H5" fill="none" stroke="#707070" stroke-width="1"/><path d="M8 0.5V4H11.5" fill="none" stroke="#707070" stroke-width="1"/><path d="M6 15.5L6.6 12.2L12.6 6.2L15 8.6L9 14.6Z" fill="#3A78C0"/><path d="M7.2 12.2L9.6 14.6M11.4 7.4L13.8 9.8" stroke="#fff" stroke-width="0.8"/></svg>
<div class="t" style="left:1004px;top:172px;width:13px;height:18px;line-height:18px;font-size:11.3px;overflow:hidden">U r</div>
</div>
<div style="left:1232px;top:120px;width:16px;height:210px;background:#F0F0F0"></div>
<div style="left:1232px;top:296px;width:16px;height:15px;background:#CDCDCD"></div>
<svg style="left:1235px;top:124px" width="9" height="9"><path d="M0.8 5.5L4.5 2L8.2 5.5" fill="none" stroke="#4A4A4A" stroke-width="2.1"/></svg>
<svg style="left:1235px;top:316px" width="9" height="9"><path d="M0.8 2L4.5 5.5L8.2 2" fill="none" stroke="#4A4A4A" stroke-width="2.1"/></svg>
<div style="left:214px;top:311px;width:1018px;height:19px;background:#fff"></div>
<div style="left:214px;top:330px;width:1034px;height:17px;background:#fff"></div>
<div style="left:215px;top:330px;width:15px;height:17px;background:#E6E6E6"></div>
<svg style="left:215px;top:331px" width="15" height="16"><rect x="3" y="5" width="1.3" height="6" fill="#202020"/><path d="M8 5v6l-3.5-3zM12 5v6l-3.5-3z" fill="#202020"/></svg>
<div style="left:232px;top:330px;width:15px;height:17px;background:#E6E6E6"></div>
<svg style="left:232px;top:331px" width="15" height="16"><path d="M7 5v6l-3.5-3zM11 5v6l-3.5-3z" fill="#202020"/></svg>
<div style="left:249px;top:330px;width:15px;height:17px;background:#E6E6E6"></div>
<svg style="left:249px;top:331px" width="15" height="16"><path d="M9 5v6l-3.5-3z" fill="#202020"/></svg>
<div class="t" style="left:271px;top:330px;height:18px;line-height:18px;font-size:13px">492 od 496</div>
<div style="left:344px;top:330px;width:15px;height:17px;background:#E6E6E6"></div>
<svg style="left:344px;top:331px" width="15" height="16"><path d="M6 5v6l3.5-3z" fill="#202020"/></svg>
<div style="left:361px;top:330px;width:15px;height:17px;background:#E6E6E6"></div>
<svg style="left:361px;top:331px" width="15" height="16"><path d="M4 5v6l3.5-3zM8 5v6l3.5-3z" fill="#202020"/></svg>
<div style="left:378px;top:330px;width:15px;height:17px;background:#E6E6E6"></div>
<svg style="left:378px;top:331px" width="15" height="16"><path d="M3 5v6l3.5-3zM7 5v6l3.5-3z" fill="#202020"/><rect x="11" y="5" width="1.3" height="6" fill="#202020"/></svg>
<div style="left:395px;top:330px;width:15px;height:17px;background:#E6E6E6"></div>
<svg style="left:395px;top:331px" width="15" height="16"><path d="M3 8h9" stroke="#B0B0B0" stroke-width="2"/></svg>
<div style="left:412px;top:330px;width:15px;height:17px;background:#E6E6E6"></div>
<svg style="left:412px;top:331px" width="15" height="16"><path d="M4.5 9.5h6l-3-3z" fill="#B0B0B0"/></svg>
<div style="left:429px;top:330px;width:15px;height:17px;background:#E6E6E6"></div>
<svg style="left:429px;top:331px" width="15" height="16"><path d="M3 8l3 3l6-6" fill="none" stroke="#B0B0B0" stroke-width="1.3"/></svg>
<div style="left:446px;top:330px;width:15px;height:17px;background:#E6E6E6"></div>
<svg style="left:446px;top:331px" width="15" height="16"><path d="M4 5l7 7M11 5l-7 7" stroke="#B0B0B0" stroke-width="1.3"/></svg>
<div style="left:463px;top:330px;width:15px;height:17px;background:#E6E6E6"></div>
<svg style="left:463px;top:331px" width="15" height="16"><path d="M3 12c0-4 2-5 7-5" fill="none" stroke="#202020" stroke-width="2"/><path d="M9 3.5l4 3.5l-4 3.5z" fill="#202020"/></svg>
<div style="left:480px;top:330px;width:15px;height:17px;background:#E6E6E6"></div>
<svg style="left:480px;top:331px" width="15" height="16"><line x1="12.00" y1="8.00" x2="3.00" y2="8.00" stroke="#202020" stroke-width="1.8"/><line x1="10.68" y1="11.18" x2="4.32" y2="4.82" stroke="#202020" stroke-width="1.8"/><line x1="7.50" y1="12.50" x2="7.50" y2="3.50" stroke="#202020" stroke-width="1.8"/><line x1="4.32" y1="11.18" x2="10.68" y2="4.82" stroke="#202020" stroke-width="1.8"/></svg>
<div style="left:497px;top:330px;width:15px;height:17px;background:#E6E6E6"></div>
<svg style="left:497px;top:331px" width="15" height="16"><line x1="12.00" y1="8.00" x2="3.00" y2="8.00" stroke="#808080" stroke-width="1.8"/><line x1="10.68" y1="11.18" x2="4.32" y2="4.82" stroke="#808080" stroke-width="1.8"/><line x1="7.50" y1="12.50" x2="7.50" y2="3.50" stroke="#808080" stroke-width="1.8"/><line x1="4.32" y1="11.18" x2="10.68" y2="4.82" stroke="#808080" stroke-width="1.8"/><line x1="3" y1="2" x2="3.5" y2="4.5" stroke="#808080" stroke-width="1"/></svg>
<div style="left:514px;top:330px;width:15px;height:17px;background:#E6E6E6"></div>
<svg style="left:514px;top:331px" width="15" height="16"><path d="M3 4h9l-3.5 4v4.5h-2v-4.5z" fill="#B0B0B0"/></svg>
<div style="left:530px;top:330px;width:718px;height:17px;background:#F0F0F0"></div>
<div style="left:597px;top:330px;width:392px;height:17px;background:#CDCDCD"></div>
<svg style="left:584px;top:334px" width="9" height="9"><path d="M6 1L2.5 4.5L6 8" fill="none" stroke="#4A4A4A" stroke-width="2.1"/></svg>
<svg style="left:1219px;top:334px" width="9" height="9"><path d="M2 1L5.5 4.5L2 8" fill="none" stroke="#4A4A4A" stroke-width="2.1"/></svg>
<div style="left:213px;top:349px;width:1036px;height:30px;background:#F0F0F0"></div>
<div style="left:214px;top:350px;width:177px;height:28px;background:#F0F0F0;border:1px solid #DCDCDC;border-right-color:#C8C8C8;border-bottom-color:#C8C8C8;box-shadow:inset 1px 1px 0 #FAFAFA"></div>
<div style="left:221px;top:358px;width:12px;height:12px;border:1px solid #333;background:#fff"></div>
<div class="t" style="left:238px;top:356px;height:16px;line-height:16px;font-size:11.5px;color:#000">PRIKAŽI SVE DOKUMENTE</div>
<div style="left:394px;top:350px;width:104px;height:28px;background:#F0F0F0;border:1px solid #DCDCDC;border-right-color:#C8C8C8;border-bottom-color:#C8C8C8;box-shadow:inset 1px 1px 0 #FAFAFA"></div>
<svg style="left:398px;top:358px" width="15" height="12"><circle cx="3.8" cy="8" r="3.2" fill="#fff" stroke="#2F5D9A" stroke-width="1.4"/><circle cx="11.2" cy="8" r="3.2" fill="#fff" stroke="#2F5D9A" stroke-width="1.4"/><rect x="1.5" y="0.5" width="4" height="5" fill="#2F5D9A"/><rect x="9" y="0.5" width="4" height="5" fill="#2F5D9A"/><rect x="5" y="2.5" width="4" height="2" fill="#2F5D9A"/></svg>
<div style="left:417px;top:353px;width:78px;height:22px;background:#fff;border:1px solid #B4B4B4"></div>
<div style="left:500px;top:350px;width:529px;height:28px;background:#F0F0F0;border:1px solid #DCDCDC;border-right-color:#C8C8C8;border-bottom-color:#C8C8C8;box-shadow:inset 1px 1px 0 #FAFAFA"></div>
<div class="t" style="left:500px;top:356px;width:529px;height:16px;line-height:16px;text-align:center;font-size:11.4px">STR"POPOVIĆ" KRAGUJEVAC - POPOVIĆ</div>
<div style="left:1032px;top:350px;width:152px;height:28px;background:#F0F0F0;border:1px solid #DCDCDC;border-right-color:#C8C8C8;border-bottom-color:#C8C8C8;box-shadow:inset 1px 1px 0 #FAFAFA"></div>
<div class="t" style="left:1032px;top:356px;width:152px;height:16px;line-height:16px;text-align:center;font-size:12px">U OBRADI</div>
<div style="left:1188px;top:352px;width:58px;height:24px;background:#E1E1E1;border:1px solid #ADADAD;box-shadow:inset 0 0 0 1px #F4F4F4"></div>
<div class="t" style="left:1199px;top:356px;height:16px;line-height:16px;font-size:12px">Osveži</div>
<div style="left:213px;top:378px;width:1036px;height:22px;background:#F0F0F0"></div>
<div style="left:214px;top:379px;width:113px;height:22px;background:#F0F0F0;border-left:1px solid #B8B8B8;border-right:1px solid #B8B8B8;clip-path:polygon(5px 0,100% 0,100% 100%,0 100%,0 5px)"></div>
<div style="left:214px;top:379px;width:113px;height:3px;background:#2B579A;clip-path:polygon(3px 0,100% 0,100% 100%,0 100%)"></div>
<svg style="left:214px;top:379px" width="6" height="6"><line x1="0.5" y1="5.5" x2="5.5" y2="0.5" stroke="#B4B4B4"/></svg>
<div class="t" style="left:220px;top:384px;height:16px;line-height:16px;font-size:12px;letter-spacing:0.3px">Stavke dokumenta</div>
<div style="left:329px;top:379px;width:86px;height:21px;background:linear-gradient(#FCFCFC,#E4E4E4);border:1px solid #B4B4B4;border-bottom:none;clip-path:polygon(5px 0,100% 0,100% 100%,0 100%,0 5px)"></div>
<svg style="left:329px;top:379px" width="6" height="6"><line x1="0.5" y1="5.5" x2="5.5" y2="0.5" stroke="#B4B4B4"/></svg>
<div class="t" style="left:335px;top:384px;height:16px;line-height:16px;font-size:12px;letter-spacing:0px">Avansni računi</div>
<div style="left:417px;top:379px;width:93px;height:21px;background:linear-gradient(#FCFCFC,#E4E4E4);border:1px solid #B4B4B4;border-bottom:none;clip-path:polygon(5px 0,100% 0,100% 100%,0 100%,0 5px)"></div>
<svg style="left:417px;top:379px" width="6" height="6"><line x1="0.5" y1="5.5" x2="5.5" y2="0.5" stroke="#B4B4B4"/></svg>
<div class="t" style="left:425px;top:384px;height:16px;line-height:16px;font-size:12px;letter-spacing:0.1px">Valute plaćanja</div>
<div style="left:512px;top:379px;width:102px;height:21px;background:linear-gradient(#FCFCFC,#E4E4E4);border:1px solid #B4B4B4;border-bottom:none;clip-path:polygon(5px 0,100% 0,100% 100%,0 100%,0 5px)"></div>
<svg style="left:512px;top:379px" width="6" height="6"><line x1="0.5" y1="5.5" x2="5.5" y2="0.5" stroke="#B4B4B4"/></svg>
<div class="t" style="left:518px;top:384px;height:16px;line-height:16px;font-size:12px;letter-spacing:-0.17px">Specifikacija/POS</div>
<div style="left:616px;top:379px;width:67px;height:21px;background:linear-gradient(#FCFCFC,#E4E4E4);border:1px solid #B4B4B4;border-bottom:none;clip-path:polygon(5px 0,100% 0,100% 100%,0 100%,0 5px)"></div>
<svg style="left:616px;top:379px" width="6" height="6"><line x1="0.5" y1="5.5" x2="5.5" y2="0.5" stroke="#B4B4B4"/></svg>
<div class="t" style="left:622px;top:384px;height:16px;line-height:16px;font-size:12px;letter-spacing:0px">Napomena</div>
<div style="left:685px;top:379px;width:58px;height:21px;background:linear-gradient(#FCFCFC,#E4E4E4);border:1px solid #B4B4B4;border-bottom:none;clip-path:polygon(5px 0,100% 0,100% 100%,0 100%,0 5px)"></div>
<svg style="left:685px;top:379px" width="6" height="6"><line x1="0.5" y1="5.5" x2="5.5" y2="0.5" stroke="#B4B4B4"/></svg>
<div class="t" style="left:691px;top:384px;height:16px;line-height:16px;font-size:12px;letter-spacing:0px">Knjiženja</div>
<div style="left:745px;top:379px;width:55px;height:21px;background:linear-gradient(#FCFCFC,#E4E4E4);border:1px solid #B4B4B4;border-bottom:none;clip-path:polygon(5px 0,100% 0,100% 100%,0 100%,0 5px)"></div>
<svg style="left:745px;top:379px" width="6" height="6"><line x1="0.5" y1="5.5" x2="5.5" y2="0.5" stroke="#B4B4B4"/></svg>
<div class="t" style="left:751px;top:384px;height:16px;line-height:16px;font-size:12px;letter-spacing:0px">Događaji</div>
<div style="left:802px;top:379px;width:76px;height:21px;background:linear-gradient(#FCFCFC,#E4E4E4);border:1px solid #B4B4B4;border-bottom:none;clip-path:polygon(5px 0,100% 0,100% 100%,0 100%,0 5px)"></div>
<svg style="left:802px;top:379px" width="6" height="6"><line x1="0.5" y1="5.5" x2="5.5" y2="0.5" stroke="#B4B4B4"/></svg>
<div class="t" style="left:809px;top:384px;height:16px;line-height:16px;font-size:12px;letter-spacing:0.1px">Polja po želji</div>
<div style="left:880px;top:379px;width:100px;height:21px;background:linear-gradient(#FCFCFC,#E4E4E4);border:1px solid #B4B4B4;border-bottom:none;clip-path:polygon(5px 0,100% 0,100% 100%,0 100%,0 5px)"></div>
<svg style="left:880px;top:379px" width="6" height="6"><line x1="0.5" y1="5.5" x2="5.5" y2="0.5" stroke="#B4B4B4"/></svg>
<div class="t" style="left:888px;top:384px;height:16px;line-height:16px;font-size:12px;letter-spacing:0.2px">Vezni dokumenti</div>
<div style="left:983px;top:379px;width:87px;height:21px;background:linear-gradient(#FCFCFC,#E4E4E4);border:1px solid #B4B4B4;border-bottom:none;clip-path:polygon(5px 0,100% 0,100% 100%,0 100%,0 5px)"></div>
<svg style="left:983px;top:379px" width="6" height="6"><line x1="0.5" y1="5.5" x2="5.5" y2="0.5" stroke="#B4B4B4"/></svg>
<div class="t" style="left:989px;top:384px;height:16px;line-height:16px;font-size:12px;letter-spacing:0px">Serijski brojevi</div>
<div style="left:1072px;top:379px;width:78px;height:21px;background:linear-gradient(#FCFCFC,#E4E4E4);border:1px solid #B4B4B4;border-bottom:none;clip-path:polygon(5px 0,100% 0,100% 100%,0 100%,0 5px)"></div>
<svg style="left:1072px;top:379px" width="6" height="6"><line x1="0.5" y1="5.5" x2="5.5" y2="0.5" stroke="#B4B4B4"/></svg>
<div class="t" style="left:1078px;top:384px;height:16px;line-height:16px;font-size:12px;letter-spacing:0px">Obaveštenja</div>
<div style="left:1152px;top:379px;width:59px;height:21px;background:linear-gradient(#FCFCFC,#E4E4E4);border:1px solid #B4B4B4;border-bottom:none;clip-path:polygon(5px 0,100% 0,100% 100%,0 100%,0 5px)"></div>
<svg style="left:1152px;top:379px" width="6" height="6"><line x1="0.5" y1="5.5" x2="5.5" y2="0.5" stroke="#B4B4B4"/></svg>
<div class="t" style="left:1158px;top:384px;height:16px;line-height:16px;font-size:12px;letter-spacing:-0.25px">Garancije</div>
<div style="left:1213px;top:379px;width:30px;height:21px;background:linear-gradient(#FCFCFC,#E4E4E4);border:1px solid #B4B4B4;border-bottom:none;clip-path:polygon(5px 0,100% 0,100% 100%,0 100%,0 5px)"></div>
<svg style="left:1213px;top:379px" width="6" height="6"><line x1="0.5" y1="5.5" x2="5.5" y2="0.5" stroke="#B4B4B4"/></svg>
<div class="t" style="left:1222px;top:384px;height:16px;line-height:16px;font-size:12px;letter-spacing:-0.5px">CRF</div>
<div style="left:213px;top:400px;width:1035px;height:390px;background:#fff;border-left:1px solid #808080"></div>
<div style="left:214px;top:400px;width:1033px;height:19px;background:#F0F0F0"></div>
<div style="left:214px;top:419px;width:1033px;height:1px;background:#6C8ECB"></div>
<div class="t" style="left:217px;top:402px;width:34px;height:18px;line-height:18px;font-size:12px;overflow:hidden">RBR</div>
<div class="t" style="left:255px;top:402px;width:56px;height:18px;line-height:18px;font-size:12px;overflow:hidden">Šifra</div>
<div style="left:252px;top:402px;width:1px;height:16px;background:#6C8ECB"></div>
<div class="t" style="left:316px;top:402px;width:219px;height:18px;line-height:18px;font-size:12px;overflow:hidden">Naziv artikla</div>
<div style="left:312px;top:402px;width:1px;height:16px;background:#6C8ECB"></div>
<div class="t" style="left:538px;top:402px;width:51px;height:18px;line-height:18px;font-size:12px;overflow:hidden">Količina</div>
<div style="left:535px;top:402px;width:1px;height:16px;background:#6C8ECB"></div>
<div class="t" style="left:593px;top:402px;width:73px;height:18px;line-height:18px;font-size:12px;overflow:hidden">Cena</div>
<div style="left:590px;top:402px;width:1px;height:16px;background:#6C8ECB"></div>
<div class="t" style="left:670px;top:402px;width:38px;height:18px;line-height:18px;font-size:12px;overflow:hidden">% R...</div>
<div style="left:667px;top:402px;width:1px;height:16px;background:#6C8ECB"></div>
<div class="t" style="left:712px;top:402px;width:59px;height:18px;line-height:18px;font-size:12px;overflow:hidden">Iznos rab.</div>
<div style="left:709px;top:402px;width:1px;height:16px;background:#6C8ECB"></div>
<div class="t" style="left:775px;top:402px;width:60px;height:18px;line-height:18px;font-size:12px;overflow:hidden">% Akc.r...</div>
<div style="left:772px;top:402px;width:1px;height:16px;background:#6C8ECB"></div>
<div class="t" style="left:839px;top:402px;width:60px;height:18px;line-height:18px;font-size:12px;overflow:hidden">Izn.akc.r...</div>
<div style="left:836px;top:402px;width:1px;height:16px;background:#6C8ECB"></div>
<div class="t" style="left:903px;top:402px;width:68px;height:18px;line-height:18px;font-size:12px;overflow:hidden">Ukup.rabat</div>
<div style="left:900px;top:402px;width:1px;height:16px;background:#6C8ECB"></div>
<div class="t" style="left:975px;top:402px;width:66px;height:18px;line-height:18px;font-size:12px;overflow:hidden">Mesto TR</div>
<div style="left:972px;top:402px;width:1px;height:16px;background:#6C8ECB"></div>
<div class="t" style="left:1045px;top:402px;width:67px;height:18px;line-height:18px;font-size:12px;overflow:hidden">Nosioc TR</div>
<div style="left:1042px;top:402px;width:1px;height:16px;background:#6C8ECB"></div>
<div class="t" style="left:1116px;top:402px;width:70px;height:18px;line-height:18px;font-size:12px;overflow:hidden">Vrednost</div>
<div style="left:1113px;top:402px;width:1px;height:16px;background:#6C8ECB"></div>
<div class="t" style="left:1190px;top:402px;width:56px;height:18px;line-height:18px;font-size:12px;overflow:hidden">Konto</div>
<div style="left:1187px;top:402px;width:1px;height:16px;background:#6C8ECB"></div>
<div style="left:1247px;top:400px;width:1px;height:20px;background:#6C8ECB"></div>
<div style="left:214px;top:437px;width:1033px;height:1px;background:#A0A0A0"></div>
<svg style="left:217px;top:423px" width="12" height="11"><rect x="0.5" y="0.5" width="10.5" height="9.5" rx="1" fill="#E8EEF6" stroke="#6A7A90"/><path d="M3 5.25h5.5M5.75 2.5v5.5" stroke="#203050" stroke-width="1.1"/></svg>
<div class="t" style="left:230px;top:420px;width:20px;height:18px;line-height:18px;font-size:11.3px;text-align:right;color:#000">1</div>
<div style="left:252px;top:420px;width:1px;height:18px;background:#A0A0A0"></div>
<div class="t" style="left:253px;top:420px;width:59px;height:18px;line-height:18px;font-size:11.3px;text-align:center;color:#000">002401</div>
<div style="left:312px;top:420px;width:1px;height:18px;background:#A0A0A0"></div>
<div class="t" style="left:314px;top:420px;width:220px;height:18px;line-height:18px;font-size:10.6px;letter-spacing:-0.3px;color:#000;overflow:hidden">JAGER GAUDA</div>
<div style="left:535px;top:420px;width:1px;height:18px;background:#A0A0A0"></div>
<div class="t" style="left:536px;top:420px;width:51px;height:18px;line-height:18px;font-size:11.3px;text-align:right;color:#000">2,500</div>
<div style="left:590px;top:420px;width:1px;height:18px;background:#A0A0A0"></div>
<div class="t" style="left:591px;top:420px;width:73px;height:18px;line-height:18px;font-size:11.3px;text-align:right;color:#000">1.039,00</div>
<div style="left:667px;top:420px;width:1px;height:18px;background:#A0A0A0"></div>
<div class="t" style="left:668px;top:420px;width:38px;height:18px;line-height:18px;font-size:11.3px;text-align:right;color:#000">5,00</div>
<div style="left:709px;top:420px;width:1px;height:18px;background:#A0A0A0"></div>
<div class="t" style="left:710px;top:420px;width:59px;height:18px;line-height:18px;font-size:11.3px;text-align:right;color:#000">129,88</div>
<div style="left:772px;top:420px;width:1px;height:18px;background:#A0A0A0"></div>
<div class="t" style="left:773px;top:420px;width:60px;height:18px;line-height:18px;font-size:11.3px;text-align:right;color:#000">20,00</div>
<div style="left:836px;top:420px;width:1px;height:18px;background:#A0A0A0"></div>
<div class="t" style="left:837px;top:420px;width:60px;height:18px;line-height:18px;font-size:11.3px;text-align:right;color:#000">493,52</div>
<div style="left:900px;top:420px;width:1px;height:18px;background:#A0A0A0"></div>
<div class="t" style="left:901px;top:420px;width:68px;height:18px;line-height:18px;font-size:11.3px;text-align:right;color:#000">623,40</div>
<div style="left:972px;top:420px;width:1px;height:18px;background:#A0A0A0"></div>
<div style="left:1042px;top:420px;width:1px;height:18px;background:#A0A0A0"></div>
<div style="left:1113px;top:420px;width:1px;height:18px;background:#A0A0A0"></div>
<div class="t" style="left:1114px;top:420px;width:70px;height:18px;line-height:18px;font-size:11.3px;text-align:right;color:#000">2.368,92</div>
<div style="left:1187px;top:420px;width:1px;height:18px;background:#A0A0A0"></div>
<div class="t" style="left:1189px;top:420px;width:57px;height:18px;line-height:18px;font-size:11.3px;color:#000;overflow:hidden">13201</div>
<div style="left:231px;top:438px;width:1016px;height:17px;background:#4278CC"></div>
<div style="left:214px;top:455px;width:1033px;height:1px;background:#A0A0A0"></div>
<svg style="left:217px;top:441px" width="12" height="11"><rect x="0.5" y="0.5" width="10.5" height="9.5" rx="1" fill="#E8EEF6" stroke="#6A7A90"/><path d="M3 5.25h5.5M5.75 2.5v5.5" stroke="#203050" stroke-width="1.1"/></svg>
<div class="t" style="left:230px;top:438px;width:20px;height:18px;line-height:18px;font-size:11.3px;text-align:right;color:#fff">2</div>
<div style="left:252px;top:438px;width:1px;height:18px;background:#A0A0A0"></div>
<div class="t" style="left:253px;top:438px;width:59px;height:18px;line-height:18px;font-size:11.3px;text-align:center;color:#fff">010031</div>
<div style="left:312px;top:438px;width:1px;height:18px;background:#A0A0A0"></div>
<div class="t" style="left:314px;top:438px;width:220px;height:18px;line-height:18px;font-size:10.6px;letter-spacing:-0.3px;color:#fff;overflow:hidden">PASTIR KAJMAK 1/1 EURO LINE</div>
<div style="left:535px;top:438px;width:1px;height:18px;background:#A0A0A0"></div>
<div class="t" style="left:536px;top:438px;width:51px;height:18px;line-height:18px;font-size:11.3px;text-align:right;color:#fff">3,000</div>
<div style="left:590px;top:438px;width:1px;height:18px;background:#A0A0A0"></div>
<div class="t" style="left:591px;top:438px;width:73px;height:18px;line-height:18px;font-size:11.3px;text-align:right;color:#fff">1.299,00</div>
<div style="left:667px;top:438px;width:1px;height:18px;background:#A0A0A0"></div>
<div class="t" style="left:668px;top:438px;width:38px;height:18px;line-height:18px;font-size:11.3px;text-align:right;color:#fff">20,00</div>
<div style="left:709px;top:438px;width:1px;height:18px;background:#A0A0A0"></div>
<div class="t" style="left:710px;top:438px;width:59px;height:18px;line-height:18px;font-size:11.3px;text-align:right;color:#fff">779,40</div>
<div style="left:772px;top:438px;width:1px;height:18px;background:#A0A0A0"></div>
<div class="t" style="left:773px;top:438px;width:60px;height:18px;line-height:18px;font-size:11.3px;text-align:right;color:#fff">5,00</div>
<div style="left:836px;top:438px;width:1px;height:18px;background:#A0A0A0"></div>
<div class="t" style="left:837px;top:438px;width:60px;height:18px;line-height:18px;font-size:11.3px;text-align:right;color:#fff">155,88</div>
<div style="left:900px;top:438px;width:1px;height:18px;background:#A0A0A0"></div>
<div class="t" style="left:901px;top:438px;width:68px;height:18px;line-height:18px;font-size:11.3px;text-align:right;color:#fff">935,28</div>
<div style="left:972px;top:438px;width:1px;height:18px;background:#A0A0A0"></div>
<div style="left:1042px;top:438px;width:1px;height:18px;background:#A0A0A0"></div>
<div style="left:1113px;top:438px;width:1px;height:18px;background:#A0A0A0"></div>
<div class="t" style="left:1114px;top:438px;width:70px;height:18px;line-height:18px;font-size:11.3px;text-align:right;color:#fff">3.554,06</div>
<div style="left:1187px;top:438px;width:1px;height:18px;background:#A0A0A0"></div>
<div class="t" style="left:1189px;top:438px;width:57px;height:18px;line-height:18px;font-size:11.3px;color:#fff;overflow:hidden">13201</div>
<div style="left:214px;top:473px;width:1033px;height:1px;background:#A0A0A0"></div>
<svg style="left:217px;top:459px" width="12" height="11"><rect x="0.5" y="0.5" width="10.5" height="9.5" rx="1" fill="#E8EEF6" stroke="#6A7A90"/><path d="M3 5.25h5.5M5.75 2.5v5.5" stroke="#203050" stroke-width="1.1"/></svg>
<div class="t" style="left:230px;top:456px;width:20px;height:18px;line-height:18px;font-size:11.3px;text-align:right;color:#000">3</div>
<div style="left:252px;top:456px;width:1px;height:18px;background:#A0A0A0"></div>
<div class="t" style="left:253px;top:456px;width:59px;height:18px;line-height:18px;font-size:11.3px;text-align:center;color:#000">010045</div>
<div style="left:312px;top:456px;width:1px;height:18px;background:#A0A0A0"></div>
<div class="t" style="left:314px;top:456px;width:220px;height:18px;line-height:18px;font-size:10.6px;letter-spacing:-0.3px;color:#000;overflow:hidden">PASTIR PAPRIKA U PAVLACI 5KG</div>
<div style="left:535px;top:456px;width:1px;height:18px;background:#A0A0A0"></div>
<div class="t" style="left:536px;top:456px;width:51px;height:18px;line-height:18px;font-size:11.3px;text-align:right;color:#000">5,000</div>
<div style="left:590px;top:456px;width:1px;height:18px;background:#A0A0A0"></div>
<div class="t" style="left:591px;top:456px;width:73px;height:18px;line-height:18px;font-size:11.3px;text-align:right;color:#000">629,00</div>
<div style="left:667px;top:456px;width:1px;height:18px;background:#A0A0A0"></div>
<div class="t" style="left:668px;top:456px;width:38px;height:18px;line-height:18px;font-size:11.3px;text-align:right;color:#000">20,00</div>
<div style="left:709px;top:456px;width:1px;height:18px;background:#A0A0A0"></div>
<div class="t" style="left:710px;top:456px;width:59px;height:18px;line-height:18px;font-size:11.3px;text-align:right;color:#000">629,00</div>
<div style="left:772px;top:456px;width:1px;height:18px;background:#A0A0A0"></div>
<div class="t" style="left:773px;top:456px;width:60px;height:18px;line-height:18px;font-size:11.3px;text-align:right;color:#000">16,00</div>
<div style="left:836px;top:456px;width:1px;height:18px;background:#A0A0A0"></div>
<div class="t" style="left:837px;top:456px;width:60px;height:18px;line-height:18px;font-size:11.3px;text-align:right;color:#000">402,56</div>
<div style="left:900px;top:456px;width:1px;height:18px;background:#A0A0A0"></div>
<div class="t" style="left:901px;top:456px;width:68px;height:18px;line-height:18px;font-size:11.3px;text-align:right;color:#000">1.031,56</div>
<div style="left:972px;top:456px;width:1px;height:18px;background:#A0A0A0"></div>
<div style="left:1042px;top:456px;width:1px;height:18px;background:#A0A0A0"></div>
<div style="left:1113px;top:456px;width:1px;height:18px;background:#A0A0A0"></div>
<div class="t" style="left:1114px;top:456px;width:70px;height:18px;line-height:18px;font-size:11.3px;text-align:right;color:#000">2.536,13</div>
<div style="left:1187px;top:456px;width:1px;height:18px;background:#A0A0A0"></div>
<div class="t" style="left:1189px;top:456px;width:57px;height:18px;line-height:18px;font-size:11.3px;color:#000;overflow:hidden">13201</div>
<div style="left:231px;top:474px;width:1016px;height:17px;background:#4278CC"></div>
<div style="left:214px;top:491px;width:1033px;height:1px;background:#A0A0A0"></div>
<svg style="left:217px;top:477px" width="12" height="11"><rect x="0.5" y="0.5" width="10.5" height="9.5" rx="1" fill="#E8EEF6" stroke="#6A7A90"/><path d="M3 5.25h5.5M5.75 2.5v5.5" stroke="#203050" stroke-width="1.1"/></svg>
<div class="t" style="left:230px;top:474px;width:20px;height:18px;line-height:18px;font-size:11.3px;text-align:right;color:#fff">4</div>
<div style="left:252px;top:474px;width:1px;height:18px;background:#A0A0A0"></div>
<div class="t" style="left:253px;top:474px;width:59px;height:18px;line-height:18px;font-size:11.3px;text-align:center;color:#fff">003019</div>
<div style="left:312px;top:474px;width:1px;height:18px;background:#A0A0A0"></div>
<div class="t" style="left:314px;top:474px;width:220px;height:18px;line-height:18px;font-size:10.6px;letter-spacing:-0.3px;color:#fff;overflow:hidden">KECAP BLAGI 190GR TUBA POLIMARK</div>
<div style="left:535px;top:474px;width:1px;height:18px;background:#A0A0A0"></div>
<div class="t" style="left:536px;top:474px;width:51px;height:18px;line-height:18px;font-size:11.3px;text-align:right;color:#fff">15,000</div>
<div style="left:590px;top:474px;width:1px;height:18px;background:#A0A0A0"></div>
<div class="t" style="left:591px;top:474px;width:73px;height:18px;line-height:18px;font-size:11.3px;text-align:right;color:#fff">55,27</div>
<div style="left:667px;top:474px;width:1px;height:18px;background:#A0A0A0"></div>
<div class="t" style="left:668px;top:474px;width:38px;height:18px;line-height:18px;font-size:11.3px;text-align:right;color:#fff">3,00</div>
<div style="left:709px;top:474px;width:1px;height:18px;background:#A0A0A0"></div>
<div class="t" style="left:710px;top:474px;width:59px;height:18px;line-height:18px;font-size:11.3px;text-align:right;color:#fff">24,87</div>
<div style="left:772px;top:474px;width:1px;height:18px;background:#A0A0A0"></div>
<div class="t" style="left:773px;top:474px;width:60px;height:18px;line-height:18px;font-size:11.3px;text-align:right;color:#fff">0,00</div>
<div style="left:836px;top:474px;width:1px;height:18px;background:#A0A0A0"></div>
<div class="t" style="left:837px;top:474px;width:60px;height:18px;line-height:18px;font-size:11.3px;text-align:right;color:#fff">0,00</div>
<div style="left:900px;top:474px;width:1px;height:18px;background:#A0A0A0"></div>
<div class="t" style="left:901px;top:474px;width:68px;height:18px;line-height:18px;font-size:11.3px;text-align:right;color:#fff">24,87</div>
<div style="left:972px;top:474px;width:1px;height:18px;background:#A0A0A0"></div>
<div style="left:1042px;top:474px;width:1px;height:18px;background:#A0A0A0"></div>
<div style="left:1113px;top:474px;width:1px;height:18px;background:#A0A0A0"></div>
<div class="t" style="left:1114px;top:474px;width:70px;height:18px;line-height:18px;font-size:11.3px;text-align:right;color:#fff">965,02</div>
<div style="left:1187px;top:474px;width:1px;height:18px;background:#A0A0A0"></div>
<div class="t" style="left:1189px;top:474px;width:57px;height:18px;line-height:18px;font-size:11.3px;color:#fff;overflow:hidden">13201</div>
<div style="left:231px;top:492px;width:1016px;height:17px;background:#4278CC"></div>
<div style="left:214px;top:509px;width:1033px;height:1px;background:#A0A0A0"></div>
<svg style="left:217px;top:495px" width="12" height="11"><rect x="0.5" y="0.5" width="10.5" height="9.5" rx="1" fill="#E8EEF6" stroke="#6A7A90"/><path d="M3 5.25h5.5M5.75 2.5v5.5" stroke="#203050" stroke-width="1.1"/></svg>
<div class="t" style="left:230px;top:492px;width:20px;height:18px;line-height:18px;font-size:11.3px;text-align:right;color:#fff">5</div>
<div style="left:252px;top:492px;width:1px;height:18px;background:#A0A0A0"></div>
<div style="left:253px;top:492px;width:59px;height:17px;background:#fff;outline:1px dotted #000;outline-offset:-1px"></div>
<div class="t" style="left:253px;top:492px;width:59px;height:18px;line-height:18px;font-size:11.3px;text-align:center;color:#000">003069</div>
<div style="left:312px;top:492px;width:1px;height:18px;background:#A0A0A0"></div>
<div class="t" style="left:314px;top:492px;width:220px;height:18px;line-height:18px;font-size:10.6px;letter-spacing:-0.3px;color:#fff;overflow:hidden">KECAP LJUTI  90 GR POLIMARK</div>
<div style="left:535px;top:492px;width:1px;height:18px;background:#A0A0A0"></div>
<div class="t" style="left:536px;top:492px;width:51px;height:18px;line-height:18px;font-size:11.3px;text-align:right;color:#fff">22,000</div>
<div style="left:590px;top:492px;width:1px;height:18px;background:#A0A0A0"></div>
<div class="t" style="left:591px;top:492px;width:73px;height:18px;line-height:18px;font-size:11.3px;text-align:right;color:#fff">28,93</div>
<div style="left:667px;top:492px;width:1px;height:18px;background:#A0A0A0"></div>
<div class="t" style="left:668px;top:492px;width:38px;height:18px;line-height:18px;font-size:11.3px;text-align:right;color:#fff">3,00</div>
<div style="left:709px;top:492px;width:1px;height:18px;background:#A0A0A0"></div>
<div class="t" style="left:710px;top:492px;width:59px;height:18px;line-height:18px;font-size:11.3px;text-align:right;color:#fff">19,09</div>
<div style="left:772px;top:492px;width:1px;height:18px;background:#A0A0A0"></div>
<div class="t" style="left:773px;top:492px;width:60px;height:18px;line-height:18px;font-size:11.3px;text-align:right;color:#fff">0,00</div>
<div style="left:836px;top:492px;width:1px;height:18px;background:#A0A0A0"></div>
<div class="t" style="left:837px;top:492px;width:60px;height:18px;line-height:18px;font-size:11.3px;text-align:right;color:#fff">0,00</div>
<div style="left:900px;top:492px;width:1px;height:18px;background:#A0A0A0"></div>
<div class="t" style="left:901px;top:492px;width:68px;height:18px;line-height:18px;font-size:11.3px;text-align:right;color:#fff">19,09</div>
<div style="left:972px;top:492px;width:1px;height:18px;background:#A0A0A0"></div>
<div style="left:1042px;top:492px;width:1px;height:18px;background:#A0A0A0"></div>
<div style="left:1113px;top:492px;width:1px;height:18px;background:#A0A0A0"></div>
<div class="t" style="left:1114px;top:492px;width:70px;height:18px;line-height:18px;font-size:11.3px;text-align:right;color:#fff">740,84</div>
<div style="left:1187px;top:492px;width:1px;height:18px;background:#A0A0A0"></div>
<div class="t" style="left:1189px;top:492px;width:57px;height:18px;line-height:18px;font-size:11.3px;color:#fff;overflow:hidden">13201</div>
<div style="left:214px;top:527px;width:1033px;height:1px;background:#A0A0A0"></div>
<svg style="left:217px;top:513px" width="12" height="11"><rect x="0.5" y="0.5" width="10.5" height="9.5" rx="1" fill="#E8EEF6" stroke="#6A7A90"/><path d="M3 5.25h5.5M5.75 2.5v5.5" stroke="#203050" stroke-width="1.1"/></svg>
<div class="t" style="left:230px;top:510px;width:20px;height:18px;line-height:18px;font-size:11.3px;text-align:right;color:#000">6</div>
<div style="left:252px;top:510px;width:1px;height:18px;background:#A0A0A0"></div>
<div class="t" style="left:253px;top:510px;width:59px;height:18px;line-height:18px;font-size:11.3px;text-align:center;color:#000">000120</div>
<div style="left:312px;top:510px;width:1px;height:18px;background:#A0A0A0"></div>
<div class="t" style="left:314px;top:510px;width:220px;height:18px;line-height:18px;font-size:10.6px;letter-spacing:-0.3px;color:#000;overflow:hidden">LAGANI JOGURT 1% 1,5 L</div>
<div style="left:535px;top:510px;width:1px;height:18px;background:#A0A0A0"></div>
<div class="t" style="left:536px;top:510px;width:51px;height:18px;line-height:18px;font-size:11.3px;text-align:right;color:#000">6,000</div>
<div style="left:590px;top:510px;width:1px;height:18px;background:#A0A0A0"></div>
<div class="t" style="left:591px;top:510px;width:73px;height:18px;line-height:18px;font-size:11.3px;text-align:right;color:#000">134,00</div>
<div style="left:667px;top:510px;width:1px;height:18px;background:#A0A0A0"></div>
<div class="t" style="left:668px;top:510px;width:38px;height:18px;line-height:18px;font-size:11.3px;text-align:right;color:#000">0,00</div>
<div style="left:709px;top:510px;width:1px;height:18px;background:#A0A0A0"></div>
<div class="t" style="left:710px;top:510px;width:59px;height:18px;line-height:18px;font-size:11.3px;text-align:right;color:#000">0,00</div>
<div style="left:772px;top:510px;width:1px;height:18px;background:#A0A0A0"></div>
<div class="t" style="left:773px;top:510px;width:60px;height:18px;line-height:18px;font-size:11.3px;text-align:right;color:#000">0,00</div>
<div style="left:836px;top:510px;width:1px;height:18px;background:#A0A0A0"></div>
<div class="t" style="left:837px;top:510px;width:60px;height:18px;line-height:18px;font-size:11.3px;text-align:right;color:#000">0,00</div>
<div style="left:900px;top:510px;width:1px;height:18px;background:#A0A0A0"></div>
<div class="t" style="left:901px;top:510px;width:68px;height:18px;line-height:18px;font-size:11.3px;text-align:right;color:#000">0,00</div>
<div style="left:972px;top:510px;width:1px;height:18px;background:#A0A0A0"></div>
<div style="left:1042px;top:510px;width:1px;height:18px;background:#A0A0A0"></div>
<div style="left:1113px;top:510px;width:1px;height:18px;background:#A0A0A0"></div>
<div class="t" style="left:1114px;top:510px;width:70px;height:18px;line-height:18px;font-size:11.3px;text-align:right;color:#000">884,40</div>
<div style="left:1187px;top:510px;width:1px;height:18px;background:#A0A0A0"></div>
<div class="t" style="left:1189px;top:510px;width:57px;height:18px;line-height:18px;font-size:11.3px;color:#000;overflow:hidden">13202</div>
<div style="left:214px;top:545px;width:1033px;height:1px;background:#A0A0A0"></div>
<svg style="left:217px;top:531px" width="12" height="11"><rect x="0.5" y="0.5" width="10.5" height="9.5" rx="1" fill="#E8EEF6" stroke="#6A7A90"/><path d="M3 5.25h5.5M5.75 2.5v5.5" stroke="#203050" stroke-width="1.1"/></svg>
<div class="t" style="left:230px;top:528px;width:20px;height:18px;line-height:18px;font-size:11.3px;text-align:right;color:#000">7</div>
<div style="left:252px;top:528px;width:1px;height:18px;background:#A0A0A0"></div>
<div class="t" style="left:253px;top:528px;width:59px;height:18px;line-height:18px;font-size:11.3px;text-align:center;color:#000">000121</div>
<div style="left:312px;top:528px;width:1px;height:18px;background:#A0A0A0"></div>
<div class="t" style="left:314px;top:528px;width:220px;height:18px;line-height:18px;font-size:10.6px;letter-spacing:-0.3px;color:#000;overflow:hidden">LAGANI JOGURT 1% 0,18%</div>
<div style="left:535px;top:528px;width:1px;height:18px;background:#A0A0A0"></div>
<div class="t" style="left:536px;top:528px;width:51px;height:18px;line-height:18px;font-size:11.3px;text-align:right;color:#000">20,000</div>
<div style="left:590px;top:528px;width:1px;height:18px;background:#A0A0A0"></div>
<div class="t" style="left:591px;top:528px;width:73px;height:18px;line-height:18px;font-size:11.3px;text-align:right;color:#000">26,73</div>
<div style="left:667px;top:528px;width:1px;height:18px;background:#A0A0A0"></div>
<div class="t" style="left:668px;top:528px;width:38px;height:18px;line-height:18px;font-size:11.3px;text-align:right;color:#000">0,00</div>
<div style="left:709px;top:528px;width:1px;height:18px;background:#A0A0A0"></div>
<div class="t" style="left:710px;top:528px;width:59px;height:18px;line-height:18px;font-size:11.3px;text-align:right;color:#000">0,00</div>
<div style="left:772px;top:528px;width:1px;height:18px;background:#A0A0A0"></div>
<div class="t" style="left:773px;top:528px;width:60px;height:18px;line-height:18px;font-size:11.3px;text-align:right;color:#000">8,00</div>
<div style="left:836px;top:528px;width:1px;height:18px;background:#A0A0A0"></div>
<div class="t" style="left:837px;top:528px;width:60px;height:18px;line-height:18px;font-size:11.3px;text-align:right;color:#000">42,77</div>
<div style="left:900px;top:528px;width:1px;height:18px;background:#A0A0A0"></div>
<div class="t" style="left:901px;top:528px;width:68px;height:18px;line-height:18px;font-size:11.3px;text-align:right;color:#000">42,77</div>
<div style="left:972px;top:528px;width:1px;height:18px;background:#A0A0A0"></div>
<div style="left:1042px;top:528px;width:1px;height:18px;background:#A0A0A0"></div>
<div style="left:1113px;top:528px;width:1px;height:18px;background:#A0A0A0"></div>
<div class="t" style="left:1114px;top:528px;width:70px;height:18px;line-height:18px;font-size:11.3px;text-align:right;color:#000">541,01</div>
<div style="left:1187px;top:528px;width:1px;height:18px;background:#A0A0A0"></div>
<div class="t" style="left:1189px;top:528px;width:57px;height:18px;line-height:18px;font-size:11.3px;color:#000;overflow:hidden">13202</div>
<div style="left:231px;top:491px;width:1016px;height:19px;border:1px dotted #D09030"></div>
<div style="left:529px;top:420px;width:5px;height:17px;background:#5CC068"></div>
<div style="left:214px;top:744px;width:1034px;height:27px;background:#DCDCDC;border-top:1px solid #8EAEDC;border-bottom:1px solid #8EAEDC"></div>
<div class="t" style="left:217px;top:748px;width:34px;height:19px;line-height:17px;background:#F0F0F0;border:1px solid #7DA2DC;font-size:11px;text-align:center;padding:0 0px">0007</div>
<div class="t" style="left:314px;top:748px;width:219px;height:19px;line-height:17px;background:#F0F0F0;border:1px solid #7DA2DC;font-size:10px;text-align:left;padding:0 1px">UKUPNO ZA DOKUMENT:</div>
<div class="t" style="left:711px;top:748px;width:60px;height:19px;line-height:17px;background:#F0F0F0;border:1px solid #7DA2DC;font-size:11px;text-align:right;padding:0 4px">1.582,24</div>
<div class="t" style="left:837px;top:748px;width:61px;height:19px;line-height:17px;background:#F0F0F0;border:1px solid #7DA2DC;font-size:11px;text-align:right;padding:0 4px">1.094,73</div>
<div class="t" style="left:901px;top:748px;width:70px;height:19px;line-height:17px;background:#F0F0F0;border:1px solid #7DA2DC;font-size:11px;text-align:right;padding:0 4px">2.676,97</div>
<div class="t" style="left:1114px;top:748px;width:71px;height:19px;line-height:17px;background:#F0F0F0;border:1px solid #7DA2DC;font-size:11px;text-align:right;padding:0 4px">11.590,38</div>
<div style="left:214px;top:771px;width:1033px;height:19px;background:#fff"></div>
<div style="left:215px;top:772px;width:15px;height:17px;background:#E6E6E6"></div>
<svg style="left:215px;top:773px" width="15" height="16"><rect x="3" y="5" width="1.3" height="6" fill="#202020"/><path d="M8 5v6l-3.5-3zM12 5v6l-3.5-3z" fill="#202020"/></svg>
<div style="left:232px;top:772px;width:15px;height:17px;background:#E6E6E6"></div>
<svg style="left:232px;top:773px" width="15" height="16"><path d="M7 5v6l-3.5-3zM11 5v6l-3.5-3z" fill="#202020"/></svg>
<div style="left:249px;top:772px;width:15px;height:17px;background:#E6E6E6"></div>
<svg style="left:249px;top:773px" width="15" height="16"><path d="M9 5v6l-3.5-3z" fill="#202020"/></svg>
<div class="t" style="left:272px;top:772px;height:18px;line-height:18px;font-size:13px">5 od 7</div>
<div style="left:316px;top:772px;width:15px;height:17px;background:#E6E6E6"></div>
<svg style="left:316px;top:773px" width="15" height="16"><path d="M6 5v6l3.5-3z" fill="#202020"/></svg>
<div style="left:333px;top:772px;width:15px;height:17px;background:#E6E6E6"></div>
<svg style="left:333px;top:773px" width="15" height="16"><path d="M4 5v6l3.5-3zM8 5v6l3.5-3z" fill="#202020"/></svg>
<div style="left:350px;top:772px;width:15px;height:17px;background:#E6E6E6"></div>
<svg style="left:350px;top:773px" width="15" height="16"><path d="M3 5v6l3.5-3zM7 5v6l3.5-3z" fill="#202020"/><rect x="11" y="5" width="1.3" height="6" fill="#202020"/></svg>
<div style="left:367px;top:772px;width:15px;height:17px;background:#E6E6E6"></div>
<svg style="left:367px;top:773px" width="15" height="16"><path d="M3 8h9M7.5 3.5v9" stroke="#B0B0B0" stroke-width="2"/></svg>
<div style="left:384px;top:772px;width:15px;height:17px;background:#E6E6E6"></div>
<svg style="left:384px;top:773px" width="15" height="16"><path d="M3 8h9" stroke="#B0B0B0" stroke-width="2"/></svg>
<div style="left:401px;top:772px;width:15px;height:17px;background:#E6E6E6"></div>
<svg style="left:401px;top:773px" width="15" height="16"><path d="M4.5 9.5h6l-3-3z" fill="#B0B0B0"/></svg>
<div style="left:418px;top:772px;width:15px;height:17px;background:#E6E6E6"></div>
<svg style="left:418px;top:773px" width="15" height="16"><path d="M3 8l3 3l6-6" fill="none" stroke="#B0B0B0" stroke-width="1.3"/></svg>
<div style="left:435px;top:772px;width:15px;height:17px;background:#E6E6E6"></div>
<svg style="left:435px;top:773px" width="15" height="16"><path d="M4 5l7 7M11 5l-7 7" stroke="#B0B0B0" stroke-width="1.3"/></svg>
<div style="left:452px;top:772px;width:15px;height:17px;background:#E6E6E6"></div>
<svg style="left:452px;top:773px" width="15" height="16"><path d="M3 12c0-4 2-5 7-5" fill="none" stroke="#202020" stroke-width="2"/><path d="M9 3.5l4 3.5l-4 3.5z" fill="#202020"/></svg>
<div style="left:469px;top:772px;width:15px;height:17px;background:#E6E6E6"></div>
<svg style="left:469px;top:773px" width="15" height="16"><line x1="12.00" y1="8.00" x2="3.00" y2="8.00" stroke="#202020" stroke-width="1.8"/><line x1="10.68" y1="11.18" x2="4.32" y2="4.82" stroke="#202020" stroke-width="1.8"/><line x1="7.50" y1="12.50" x2="7.50" y2="3.50" stroke="#202020" stroke-width="1.8"/><line x1="4.32" y1="11.18" x2="10.68" y2="4.82" stroke="#202020" stroke-width="1.8"/></svg>
<div style="left:486px;top:772px;width:15px;height:17px;background:#E6E6E6"></div>
<svg style="left:486px;top:773px" width="15" height="16"><line x1="12.00" y1="8.00" x2="3.00" y2="8.00" stroke="#808080" stroke-width="1.8"/><line x1="10.68" y1="11.18" x2="4.32" y2="4.82" stroke="#808080" stroke-width="1.8"/><line x1="7.50" y1="12.50" x2="7.50" y2="3.50" stroke="#808080" stroke-width="1.8"/><line x1="4.32" y1="11.18" x2="10.68" y2="4.82" stroke="#808080" stroke-width="1.8"/><line x1="3" y1="2" x2="3.5" y2="4.5" stroke="#808080" stroke-width="1"/></svg>
<div style="left:503px;top:772px;width:15px;height:17px;background:#E6E6E6"></div>
<svg style="left:503px;top:773px" width="15" height="16"><path d="M3 4h9l-3.5 4v4.5h-2v-4.5z" fill="#B0B0B0"/></svg>
<div style="left:519px;top:772px;width:728px;height:17px;background:#F0F0F0"></div>
<div style="left:586px;top:772px;width:366px;height:17px;background:#CDCDCD"></div>
<svg style="left:574px;top:776px" width="9" height="9"><path d="M6 1L2.5 4.5L6 8" fill="none" stroke="#4A4A4A" stroke-width="2.1"/></svg>
<svg style="left:1235px;top:776px" width="9" height="9"><path d="M2 1L5.5 4.5L2 8" fill="none" stroke="#4A4A4A" stroke-width="2.1"/></svg>
<div style="left:213px;top:789px;width:1036px;height:33px;background:#F0F0F0;border-top:1px solid #C8C8C8"></div>
<div style="left:213px;top:791px;width:78px;height:30px;background:#F0F0F0;border:1px solid #DCDCDC;border-right-color:#C8C8C8;border-bottom-color:#C8C8C8;box-shadow:inset 1px 1px 0 #FAFAFA"></div>
<div class="t" style="left:216px;top:794px;width:73px;height:24px;line-height:22px;background:#E1E1E1;border:1px solid #ADADAD;text-align:center;font-size:12.6px;color:#000">F5 - Nova</div>
<div style="left:292px;top:791px;width:108px;height:30px;background:#F0F0F0;border:1px solid #DCDCDC;border-right-color:#C8C8C8;border-bottom-color:#C8C8C8;box-shadow:inset 1px 1px 0 #FAFAFA"></div>
<div class="t" style="left:295px;top:794px;width:102px;height:24px;line-height:22px;background:#E1E1E1;border:1px solid #ADADAD;text-align:center;font-size:12.6px;color:#000">Obriši dokument</div>
<div style="left:401px;top:791px;width:80px;height:30px;background:#F0F0F0;border:1px solid #DCDCDC;border-right-color:#C8C8C8;border-bottom-color:#C8C8C8;box-shadow:inset 1px 1px 0 #FAFAFA"></div>
<div class="t" style="left:404px;top:794px;width:65px;height:24px;line-height:22px;background:#E1E1E1;border:1px solid #ADADAD;text-align:center;font-size:12.6px;color:#000">Štampaj</div>
<div style="left:469px;top:794px;width:10px;height:24px;background:#E1E1E1;border:1px solid #ADADAD;border-left:none"></div>
<svg style="left:471px;top:806px" width="6" height="4"><path d="M0 0h6L3.0 4z" fill="#000"/></svg>
<div class="t" style="left:487px;top:794px;width:88px;height:24px;line-height:22px;background:#E1E1E1;border:1px solid #ADADAD;text-align:center;font-size:12.6px;color:#000">Obriši stavke</div>
<div style="left:581px;top:791px;width:90px;height:30px;background:#F0F0F0;border:1px solid #DCDCDC;border-right-color:#C8C8C8;border-bottom-color:#C8C8C8;box-shadow:inset 1px 1px 0 #FAFAFA"></div>
<div class="t" style="left:584px;top:794px;width:86px;height:24px;line-height:22px;background:#E1E1E1;border:1px solid #ADADAD;text-align:center;font-size:12.6px;color:#000">F9 - Izm.cene</div>
<div style="left:584px;top:794px;width:86px;height:24px;background:#F0F0F0"></div>
<div class="t" style="left:585px;top:797px;height:18px;line-height:18px;font-size:12.8px">F9 - Izm.cene</div>
<div style="left:672px;top:791px;width:65px;height:30px;background:#F0F0F0;border:1px solid #DCDCDC;border-right-color:#C8C8C8;border-bottom-color:#C8C8C8;box-shadow:inset 1px 1px 0 #FAFAFA"></div>
<div class="t" style="left:675px;top:794px;width:60px;height:24px;line-height:22px;background:#D0D0D0;border:1px solid #ADADAD;text-align:center;font-size:12.6px;color:#A0A0A0">Formiraj</div>
<div style="left:736px;top:791px;width:84px;height:30px;background:#F0F0F0;border:1px solid #DCDCDC;border-right-color:#C8C8C8;border-bottom-color:#C8C8C8;box-shadow:inset 1px 1px 0 #FAFAFA"></div>
<div class="t" style="left:739px;top:794px;width:80px;height:24px;line-height:22px;background:#D0D0D0;border:1px solid #ADADAD;text-align:center;font-size:12.6px;color:#A0A0A0">Rezerviši</div>
<div style="left:820px;top:791px;width:74px;height:30px;background:#F0F0F0;border:1px solid #DCDCDC;border-right-color:#C8C8C8;border-bottom-color:#C8C8C8;box-shadow:inset 1px 1px 0 #FAFAFA"></div>
<div class="t" style="left:822px;top:794px;width:70px;height:24px;line-height:22px;background:#D0D0D0;border:1px solid #ADADAD;text-align:center;font-size:12.6px;color:#A0A0A0">Skini rez.</div>
<div style="left:895px;top:791px;width:82px;height:30px;background:#F0F0F0;border:1px solid #DCDCDC;border-right-color:#C8C8C8;border-bottom-color:#C8C8C8;box-shadow:inset 1px 1px 0 #FAFAFA"></div>
<div style="left:979px;top:791px;width:269px;height:30px;background:#F0F0F0;border:1px solid #DCDCDC;border-right-color:#C8C8C8;border-bottom-color:#C8C8C8;box-shadow:inset 1px 1px 0 #FAFAFA"></div>
<div style="left:1249px;top:93px;width:210px;height:729px;background:#F0F0F0"></div>
<div style="left:1248px;top:349px;width:2px;height:473px;background:#A8A8A8"></div>
<div style="left:1249px;top:119px;width:2px;height:230px;background:#A8A8A8"></div>
<div style="left:1250px;top:94px;width:44px;height:25px;background:linear-gradient(#FCFCFC,#E4E4E4);border:1px solid #B4B4B4;border-bottom:none;clip-path:polygon(5px 0,100% 0,100% 100%,0 100%,0 5px)"></div>
<svg style="left:1250px;top:94px" width="6" height="6"><line x1="0.5" y1="5.5" x2="5.5" y2="0.5" stroke="#B4B4B4"/></svg>
<div class="t" style="left:1257px;top:100px;height:16px;line-height:16px;font-size:12px;letter-spacing:0px">Planer</div>
<div style="left:1296px;top:94px;width:31px;height:26px;background:#F0F0F0;border-left:1px solid #B8B8B8;border-right:1px solid #B8B8B8;clip-path:polygon(5px 0,100% 0,100% 100%,0 100%,0 5px)"></div>
<div style="left:1296px;top:94px;width:31px;height:3px;background:#2B579A;clip-path:polygon(3px 0,100% 0,100% 100%,0 100%)"></div>
<svg style="left:1296px;top:94px" width="6" height="6"><line x1="0.5" y1="5.5" x2="5.5" y2="0.5" stroke="#B4B4B4"/></svg>
<div class="t" style="left:1302px;top:100px;height:16px;line-height:16px;font-size:12px;letter-spacing:0px">Info</div>
<div style="left:1330px;top:94px;width:66px;height:25px;background:linear-gradient(#FCFCFC,#E4E4E4);border:1px solid #B4B4B4;border-bottom:none;clip-path:polygon(5px 0,100% 0,100% 100%,0 100%,0 5px)"></div>
<svg style="left:1330px;top:94px" width="6" height="6"><line x1="0.5" y1="5.5" x2="5.5" y2="0.5" stroke="#B4B4B4"/></svg>
<div class="t" style="left:1337px;top:100px;height:16px;line-height:16px;font-size:12px;letter-spacing:0px">Za štampu</div>
<div style="left:1398px;top:94px;width:50px;height:25px;background:linear-gradient(#FCFCFC,#E4E4E4);border:1px solid #B4B4B4;border-bottom:none;clip-path:polygon(5px 0,100% 0,100% 100%,0 100%,0 5px)"></div>
<svg style="left:1398px;top:94px" width="6" height="6"><line x1="0.5" y1="5.5" x2="5.5" y2="0.5" stroke="#B4B4B4"/></svg>
<div class="t" style="left:1405px;top:100px;height:16px;line-height:16px;font-size:12px;letter-spacing:0px">Tajmeri</div>
<div style="left:1251px;top:119px;width:190px;height:680px;background:#fff"></div>
<div style="left:1441px;top:119px;width:18px;height:679px;background:#F0F0F0"></div>
<div style="left:1442px;top:136px;width:16px;height:483px;background:#CDCDCD"></div>
<svg style="left:1445px;top:124px" width="9" height="9"><path d="M0.8 5.5L4.5 2L8.2 5.5" fill="none" stroke="#4A4A4A" stroke-width="2.1"/></svg>
<svg style="left:1445px;top:786px" width="9" height="9"><path d="M0.8 2L4.5 5.5L8.2 2" fill="none" stroke="#4A4A4A" stroke-width="2.1"/></svg>
<div style="left:1251px;top:119px;width:190px;height:21px;background:#E4E4E4;border-bottom:2px solid #6C9BE0"></div>
<div class="t" style="left:1253px;top:122px;height:16px;line-height:16px;font-size:10.3px;color:#000">1 - PODACI O ENTITETU</div>
<div style="left:1251px;top:140px;width:190px;height:18px;border-bottom:1px solid #A0A0A0;border-right:1px solid #A0A0A0"></div>
<div style="left:1345px;top:140px;width:1px;height:18px;background:#A0A0A0"></div>
<div class="t" style="left:1252px;top:141px;height:16px;line-height:16px;font-size:10.8px;color:#000">Šifra</div>
<div class="t" style="left:1348px;top:141px;width:91px;height:16px;line-height:16px;overflow:hidden;font-size:10.8px;color:#000">03069</div>
<div style="left:1251px;top:158px;width:190px;height:18px;border-bottom:1px solid #A0A0A0;border-right:1px solid #A0A0A0"></div>
<div style="left:1345px;top:158px;width:1px;height:18px;background:#A0A0A0"></div>
<div class="t" style="left:1252px;top:159px;height:16px;line-height:16px;font-size:10.8px;color:#000">Naziv</div>
<div class="t" style="left:1348px;top:159px;width:91px;height:16px;line-height:16px;overflow:hidden;font-size:10.8px;color:#000">KECAP LJUTI  9...</div>
<div style="left:1251px;top:176px;width:190px;height:18px;border-bottom:1px solid #A0A0A0;border-right:1px solid #A0A0A0"></div>
<div style="left:1345px;top:176px;width:1px;height:18px;background:#A0A0A0"></div>
<div class="t" style="left:1252px;top:177px;height:16px;line-height:16px;font-size:10.8px;color:#000">JMR / PDV stopa</div>
<div class="t" style="left:1348px;top:177px;width:91px;height:16px;line-height:16px;overflow:hidden;font-size:10.8px;color:#000">KOM / 20 %</div>
<div style="left:1251px;top:194px;width:190px;height:18px;border-bottom:1px solid #A0A0A0;border-right:1px solid #A0A0A0"></div>
<div style="left:1345px;top:194px;width:1px;height:18px;background:#A0A0A0"></div>
<div class="t" style="left:1252px;top:195px;height:16px;line-height:16px;font-size:10.8px;color:#000">Komerc.pakovanje</div>
<div class="t" style="left:1348px;top:195px;width:91px;height:16px;line-height:16px;overflow:hidden;font-size:10.8px;color:#000">22.000</div>
<div style="left:1251px;top:212px;width:190px;height:21px;background:#E4E4E4;border-bottom:2px solid #6C9BE0"></div>
<div class="t" style="left:1253px;top:215px;height:16px;line-height:16px;font-size:10.3px;color:#3C78C8">2 - FINANSIJSKI PODACI STAVKE</div>
<div style="left:1251px;top:233px;width:190px;height:18px;border-bottom:1px solid #A0A0A0;border-right:1px solid #A0A0A0"></div>
<div style="left:1345px;top:233px;width:1px;height:18px;background:#A0A0A0"></div>
<div class="t" style="left:1252px;top:234px;height:16px;line-height:16px;font-size:10.8px;color:#000">Vrednost artikla</div>
<div class="t" style="left:1346px;top:234px;width:91px;height:16px;line-height:16px;text-align:right;font-size:10.8px;color:#000">636,46</div>
<div style="left:1251px;top:251px;width:190px;height:18px;border-bottom:1px solid #A0A0A0;border-right:1px solid #A0A0A0"></div>
<div style="left:1345px;top:251px;width:1px;height:18px;background:#A0A0A0"></div>
<div class="t" style="left:1252px;top:252px;height:16px;line-height:16px;font-size:10.8px;color:#000">Vrednost za kupca</div>
<div class="t" style="left:1346px;top:252px;width:91px;height:16px;line-height:16px;text-align:right;font-size:10.8px;color:#000">740,84</div>
<div style="left:1251px;top:269px;width:190px;height:18px;border-bottom:1px solid #A0A0A0;border-right:1px solid #A0A0A0"></div>
<div style="left:1345px;top:269px;width:1px;height:18px;background:#A0A0A0"></div>
<div class="t" style="left:1252px;top:270px;height:16px;line-height:16px;font-size:10.8px;color:#000">Cena za kupca</div>
<div class="t" style="left:1346px;top:270px;width:91px;height:16px;line-height:16px;text-align:right;font-size:10.8px;color:#000">28,06</div>
<div style="left:1251px;top:287px;width:190px;height:18px;border-bottom:1px solid #A0A0A0;border-right:1px solid #A0A0A0"></div>
<div style="left:1345px;top:287px;width:1px;height:18px;background:#A0A0A0"></div>
<div class="t" style="left:1252px;top:288px;height:16px;line-height:16px;font-size:10.8px;color:#000">Cena za kupca ...</div>
<div class="t" style="left:1346px;top:288px;width:91px;height:16px;line-height:16px;text-align:right;font-size:10.8px;color:#000">33,67</div>
<div style="left:1251px;top:305px;width:190px;height:18px;border-bottom:1px solid #A0A0A0;border-right:1px solid #A0A0A0"></div>
<div style="left:1345px;top:305px;width:1px;height:18px;background:#A0A0A0"></div>
<div class="t" style="left:1252px;top:306px;height:16px;line-height:16px;font-size:10.8px;color:#000">Iznos PDV</div>
<div class="t" style="left:1346px;top:306px;width:91px;height:16px;line-height:16px;text-align:right;font-size:10.8px;color:#000">123,47</div>
<div style="left:1251px;top:323px;width:190px;height:18px;border-bottom:1px solid #A0A0A0;border-right:1px solid #A0A0A0"></div>
<div style="left:1345px;top:323px;width:1px;height:18px;background:#A0A0A0"></div>
<div class="t" style="left:1252px;top:324px;height:16px;line-height:16px;font-size:10.8px;color:#000">% Ostvarene RUC</div>
<div class="t" style="left:1346px;top:324px;width:91px;height:16px;line-height:16px;text-align:right;font-size:10.8px;color:#000">27,78 %</div>
<div style="left:1251px;top:341px;width:190px;height:18px;border-bottom:1px solid #A0A0A0;border-right:1px solid #A0A0A0"></div>
<div style="left:1345px;top:341px;width:1px;height:18px;background:#A0A0A0"></div>
<div class="t" style="left:1252px;top:342px;height:16px;line-height:16px;font-size:10.8px;color:#000">Ostvarena RUC</div>
<div class="t" style="left:1346px;top:342px;width:91px;height:16px;line-height:16px;text-align:right;font-size:10.8px;color:#000">134,20</div>
<div style="left:1251px;top:359px;width:190px;height:21px;background:#E4E4E4;border-bottom:2px solid #6C9BE0"></div>
<div class="t" style="left:1253px;top:362px;height:16px;line-height:16px;font-size:10.3px;color:#3C78C8">8 - FINANSIJSKI PODACI PARTNERA</div>
<div style="left:1251px;top:380px;width:190px;height:18px;border-bottom:1px solid #A0A0A0;border-right:1px solid #A0A0A0"></div>
<div style="left:1345px;top:380px;width:1px;height:18px;background:#A0A0A0"></div>
<div class="t" style="left:1252px;top:381px;height:16px;line-height:16px;font-size:10.8px;color:#000">Ukupno dugovanje</div>
<div class="t" style="left:1346px;top:381px;width:91px;height:16px;line-height:16px;text-align:right;font-size:10.8px;color:#000">192.241,38</div>
<div style="left:1251px;top:398px;width:190px;height:18px;border-bottom:1px solid #A0A0A0;border-right:1px solid #A0A0A0"></div>
<div style="left:1345px;top:398px;width:1px;height:18px;background:#A0A0A0"></div>
<div class="t" style="left:1252px;top:399px;height:16px;line-height:16px;font-size:10.8px;color:#000">Dospelo dugova...</div>
<div class="t" style="left:1346px;top:399px;width:91px;height:16px;line-height:16px;text-align:right;font-size:10.8px;color:#000">192.241,38</div>
<div style="left:1251px;top:416px;width:190px;height:21px;background:#E4E4E4;border-bottom:2px solid #6C9BE0"></div>
<div class="t" style="left:1253px;top:419px;height:16px;line-height:16px;font-size:10.3px;color:#3C78C8">9 - STATISTIKA ENTITETA - 31.12.23</div>
<div style="left:1251px;top:437px;width:190px;height:18px;border-bottom:1px solid #A0A0A0;border-right:1px solid #A0A0A0"></div>
<div style="left:1345px;top:437px;width:1px;height:18px;background:#A0A0A0"></div>
<div class="t" style="left:1252px;top:438px;height:16px;line-height:16px;font-size:10.8px;color:#000">Proknjiženo stanje</div>
<div class="t" style="left:1346px;top:438px;width:91px;height:16px;line-height:16px;text-align:right;font-size:10.8px;color:#000">110,00</div>
<div style="left:1251px;top:455px;width:190px;height:18px;border-bottom:1px solid #A0A0A0;border-right:1px solid #A0A0A0"></div>
<div style="left:1345px;top:455px;width:1px;height:18px;background:#A0A0A0"></div>
<div class="t" style="left:1252px;top:456px;height:16px;line-height:16px;font-size:10.8px;color:#8B0A1A">Raspoloživo stanje</div>
<div class="t" style="left:1346px;top:456px;width:91px;height:16px;line-height:16px;text-align:right;font-size:10.8px;color:#8B0A1A">110,00</div>
<div style="left:1251px;top:473px;width:190px;height:18px;border-bottom:1px solid #A0A0A0;border-right:1px solid #A0A0A0"></div>
<div style="left:1345px;top:473px;width:1px;height:18px;background:#A0A0A0"></div>
<div class="t" style="left:1252px;top:474px;height:16px;line-height:16px;font-size:10.8px;color:#000">Fakturna cena</div>
<div class="t" style="left:1346px;top:474px;width:91px;height:16px;line-height:16px;text-align:right;font-size:10.8px;color:#000">21,96</div>
<div style="left:1251px;top:491px;width:190px;height:18px;border-bottom:1px solid #A0A0A0;border-right:1px solid #A0A0A0"></div>
<div style="left:1345px;top:491px;width:1px;height:18px;background:#A0A0A0"></div>
<div class="t" style="left:1252px;top:492px;height:16px;line-height:16px;font-size:10.8px;color:#000">Zadnja nab.cena</div>
<div class="t" style="left:1346px;top:492px;width:91px;height:16px;line-height:16px;text-align:right;font-size:10.8px;color:#000">21,96</div>
<div style="left:1251px;top:509px;width:190px;height:18px;border-bottom:1px solid #A0A0A0;border-right:1px solid #A0A0A0"></div>
<div style="left:1345px;top:509px;width:1px;height:18px;background:#A0A0A0"></div>
<div class="t" style="left:1252px;top:510px;height:16px;line-height:16px;font-size:10.8px;color:#000">Prosečna nab.c...</div>
<div class="t" style="left:1346px;top:510px;width:91px;height:16px;line-height:16px;text-align:right;font-size:10.8px;color:#000">21,95</div>
<div style="left:1251px;top:527px;width:190px;height:18px;border-bottom:1px solid #A0A0A0;border-right:1px solid #A0A0A0"></div>
<div style="left:1345px;top:527px;width:1px;height:18px;background:#A0A0A0"></div>
<div class="t" style="left:1252px;top:528px;height:16px;line-height:16px;font-size:10.8px;color:#8B0A1A">Cena bez PDV</div>
<div class="t" style="left:1346px;top:528px;width:91px;height:16px;line-height:16px;text-align:right;font-size:10.8px;color:#8B0A1A">28,93</div>
<div style="left:1251px;top:545px;width:190px;height:18px;border-bottom:1px solid #A0A0A0;border-right:1px solid #A0A0A0"></div>
<div style="left:1345px;top:545px;width:1px;height:18px;background:#A0A0A0"></div>
<div class="t" style="left:1252px;top:546px;height:16px;line-height:16px;font-size:10.8px;color:#000">Cena sa PDV</div>
<div class="t" style="left:1346px;top:546px;width:91px;height:16px;line-height:16px;text-align:right;font-size:10.8px;color:#000">34,72</div>
<div style="left:1251px;top:563px;width:190px;height:18px;border-bottom:1px solid #A0A0A0;border-right:1px solid #A0A0A0"></div>
<div style="left:1345px;top:563px;width:1px;height:18px;background:#A0A0A0"></div>
<div class="t" style="left:1252px;top:564px;height:16px;line-height:16px;font-size:10.8px;color:#000">%RUC NBC</div>
<div class="t" style="left:1346px;top:564px;width:91px;height:16px;line-height:16px;text-align:right;font-size:10.8px;color:#000">31,83</div>
<div style="left:1251px;top:581px;width:190px;height:18px;border-bottom:1px solid #A0A0A0;border-right:1px solid #A0A0A0"></div>
<div style="left:1345px;top:581px;width:1px;height:18px;background:#A0A0A0"></div>
<div class="t" style="left:1252px;top:582px;height:16px;line-height:16px;font-size:10.8px;color:#000">%RUC VPC</div>
<div class="t" style="left:1346px;top:582px;width:91px;height:16px;line-height:16px;text-align:right;font-size:10.8px;color:#000">24,14</div>
<div style="left:1251px;top:599px;width:190px;height:18px;border-bottom:1px solid #A0A0A0;border-right:1px solid #A0A0A0"></div>
<div style="left:1345px;top:599px;width:1px;height:18px;background:#A0A0A0"></div>
<div class="t" style="left:1252px;top:600px;height:16px;line-height:16px;font-size:10.8px;color:#000">Ukupno ulaz</div>
<div class="t" style="left:1346px;top:600px;width:91px;height:16px;line-height:16px;text-align:right;font-size:10.8px;color:#000">902,00</div>
<div style="left:1251px;top:617px;width:190px;height:18px;border-bottom:1px solid #A0A0A0;border-right:1px solid #A0A0A0"></div>
<div style="left:1345px;top:617px;width:1px;height:18px;background:#A0A0A0"></div>
<div class="t" style="left:1252px;top:618px;height:16px;line-height:16px;font-size:10.8px;color:#000">Ukupno izlaz</div>
<div class="t" style="left:1346px;top:618px;width:91px;height:16px;line-height:16px;text-align:right;font-size:10.8px;color:#000">792,00</div>
<div style="left:1251px;top:635px;width:190px;height:18px;border-bottom:1px solid #A0A0A0;border-right:1px solid #A0A0A0"></div>
<div style="left:1345px;top:635px;width:1px;height:18px;background:#A0A0A0"></div>
<div class="t" style="left:1252px;top:636px;height:16px;line-height:16px;font-size:10.8px;color:#000">Prethodna nedelja</div>
<div class="t" style="left:1346px;top:636px;width:91px;height:16px;line-height:16px;text-align:right;font-size:10.8px;color:#000">0,00</div>
<div style="left:1251px;top:653px;width:190px;height:18px;border-bottom:1px solid #A0A0A0;border-right:1px solid #A0A0A0"></div>
<div style="left:1345px;top:653px;width:1px;height:18px;background:#A0A0A0"></div>
<div class="t" style="left:1252px;top:654px;height:16px;line-height:16px;font-size:10.8px;color:#000">Pre 4 nedelje</div>
<div class="t" style="left:1346px;top:654px;width:91px;height:16px;line-height:16px;text-align:right;font-size:10.8px;color:#000">0,00</div>
<div style="left:1251px;top:671px;width:190px;height:18px;border-bottom:1px solid #A0A0A0;border-right:1px solid #A0A0A0"></div>
<div style="left:1345px;top:671px;width:1px;height:18px;background:#A0A0A0"></div>
<div class="t" style="left:1252px;top:672px;height:16px;line-height:16px;font-size:10.8px;color:#000">Neto prodajna c...</div>
<div class="t" style="left:1346px;top:672px;width:91px;height:16px;line-height:16px;text-align:right;font-size:10.8px;color:#000">28,06</div>
<div style="left:1251px;top:689px;width:190px;height:18px;border-bottom:1px solid #A0A0A0;border-right:1px solid #A0A0A0"></div>
<div style="left:1345px;top:689px;width:1px;height:18px;background:#A0A0A0"></div>
<div class="t" style="left:1252px;top:690px;height:16px;line-height:16px;font-size:10.8px;color:#000">Zadnja nabavka</div>
<div class="t" style="left:1348px;top:690px;width:91px;height:16px;line-height:16px;overflow:hidden;font-size:10.8px;color:#000">24.02.23</div>
<div style="left:1251px;top:707px;width:190px;height:18px;border-bottom:1px solid #A0A0A0;border-right:1px solid #A0A0A0"></div>
<div style="left:1345px;top:707px;width:1px;height:18px;background:#A0A0A0"></div>
<div class="t" style="left:1252px;top:708px;height:16px;line-height:16px;font-size:10.8px;color:#000">Naziv dobavljača</div>
<div class="t" style="left:1348px;top:708px;width:91px;height:16px;line-height:16px;overflow:hidden;font-size:10.8px;color:#000">PTP"DIS" DOO K...</div>
<div style="left:1251px;top:725px;width:190px;height:18px;border-bottom:1px solid #A0A0A0;border-right:1px solid #A0A0A0"></div>
<div style="left:1345px;top:725px;width:1px;height:18px;background:#A0A0A0"></div>
<div class="t" style="left:1252px;top:726px;height:16px;line-height:16px;font-size:10.8px;color:#000">Zadnja prodaja</div>
<div class="t" style="left:1348px;top:726px;width:91px;height:16px;line-height:16px;overflow:hidden;font-size:10.8px;color:#000">13.03.23</div>
<div style="left:1251px;top:743px;width:190px;height:18px;border-bottom:1px solid #A0A0A0;border-right:1px solid #A0A0A0"></div>
<div style="left:1345px;top:743px;width:1px;height:18px;background:#A0A0A0"></div>
<div class="t" style="left:1252px;top:744px;height:16px;line-height:16px;font-size:10.8px;color:#000">Naziv kupca</div>
<div class="t" style="left:1348px;top:744px;width:91px;height:16px;line-height:16px;overflow:hidden;font-size:10.8px;color:#000">DOO"RANDJEL...</div>
<div class="t" style="left:1260px;top:771px;height:16px;line-height:16px;font-size:11px">Stanje i promet artikla 003069</div>
<div style="left:1251px;top:798px;width:208px;height:24px;background:#F0F0F0"></div>
<div style="left:1252px;top:799px;width:152px;height:22px;background:#F0F0F0;border:1px solid #DCDCDC;border-right-color:#C8C8C8;border-bottom-color:#C8C8C8;box-shadow:inset 1px 1px 0 #FAFAFA"></div>
<div style="left:1406px;top:799px;width:17px;height:22px;background:#F0F0F0;border:1px solid #DCDCDC;border-right-color:#C8C8C8;border-bottom-color:#C8C8C8;box-shadow:inset 1px 1px 0 #FAFAFA"></div>
<div style="left:1425px;top:799px;width:33px;height:22px;background:#F0F0F0;border:1px solid #DCDCDC;border-right-color:#C8C8C8;border-bottom-color:#C8C8C8;box-shadow:inset 1px 1px 0 #FAFAFA"></div>
<svg style="left:1254px;top:804px" width="12" height="12"><rect x="0.5" y="0.5" width="11" height="11" fill="#fff" stroke="#000"/><path d="M2.5 5.5l2.5 3l4.5-6" fill="none" stroke="#000" stroke-width="1.6"/></svg>
<div class="t" style="left:1271px;top:802px;height:16px;line-height:16px;font-size:12px">1</div>
<svg style="left:1281px;top:804px" width="12" height="12"><rect x="0.5" y="0.5" width="11" height="11" fill="#fff" stroke="#000"/><path d="M2.5 5.5l2.5 3l4.5-6" fill="none" stroke="#000" stroke-width="1.6"/></svg>
<div class="t" style="left:1298px;top:802px;height:16px;line-height:16px;font-size:12px">2</div>
<svg style="left:1308px;top:804px" width="12" height="12"><rect x="0.5" y="0.5" width="11" height="11" fill="#fff" stroke="#000"/><path d="M2.5 5.5l2.5 3l4.5-6" fill="none" stroke="#000" stroke-width="1.6"/></svg>
<div class="t" style="left:1325px;top:802px;height:16px;line-height:16px;font-size:12px">8</div>
<svg style="left:1335px;top:804px" width="12" height="12"><rect x="0.5" y="0.5" width="11" height="11" fill="#fff" stroke="#000"/><path d="M2.5 5.5l2.5 3l4.5-6" fill="none" stroke="#000" stroke-width="1.6"/></svg>
<div class="t" style="left:1352px;top:802px;height:16px;line-height:16px;font-size:12px">9</div>
<svg style="left:1362px;top:804px" width="12" height="12"><rect x="0.5" y="0.5" width="11" height="11" fill="#fff" stroke="#000"/></svg>
<div class="t" style="left:1380px;top:802px;height:16px;line-height:16px;font-size:12px">K</div>
<svg style="left:1427px;top:804px" width="12" height="12"><rect x="0.5" y="0.5" width="11" height="11" fill="#fff" stroke="#000"/></svg>
<div class="t" style="left:1444px;top:802px;height:16px;line-height:16px;font-size:12px">F</div>
<div style="left:0px;top:58px;width:1px;height:764px;background:#2B579A"></div>
<div style="left:191px;top:421px;width:1086px;height:107px;border:5px solid #ED1C24"></div>
<div style="left:481px;top:787px;width:102px;height:34px;border:5px solid #ED1C24"></div></body></html>
